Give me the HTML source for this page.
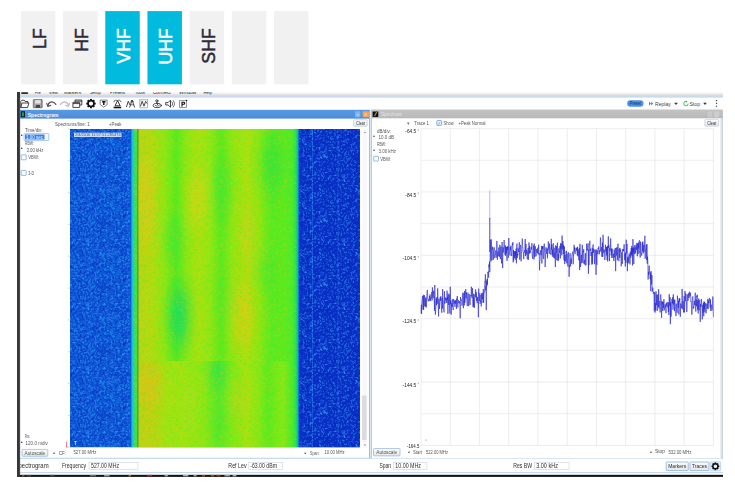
<!DOCTYPE html>
<html lang="en"><head><meta charset="utf-8"><title>Spectrum bands</title>
<style>
html,body{margin:0;padding:0;background:#fff;}
body{width:735px;height:492px;overflow:hidden;font-family:"Liberation Sans","DejaVu Sans",sans-serif;}
svg{display:block;}
text{white-space:pre;}
</style></head><body>
<svg width="735" height="492" viewBox="0 0 735 492" font-family='"Liberation Sans", "DejaVu Sans", sans-serif'>
<defs>
<filter id="bl6" x="-50%" y="-50%" width="200%" height="200%"><feGaussianBlur stdDeviation="6 11"/></filter>
<linearGradient id="ts" x1="0" y1="0" x2="0" y2="1"><stop offset="0" stop-color="#fbfbfb"/><stop offset="1" stop-color="#d9d6d1"/></linearGradient>
<linearGradient id="gtr" x1="0" y1="0" x2="1" y2="0"><stop offset="0" stop-color="#0e58d8"/><stop offset="0.2" stop-color="#20bce0"/><stop offset="0.5" stop-color="#28dc78"/><stop offset="0.85" stop-color="#48e030"/><stop offset="1" stop-color="#58e028"/></linearGradient>
<linearGradient id="tb" x1="0" y1="0" x2="0" y2="1"><stop offset="0" stop-color="#5a9ae0"/><stop offset="1" stop-color="#4a8cd8"/></linearGradient>
<linearGradient id="tg" x1="0" y1="0" x2="0" y2="1"><stop offset="0" stop-color="#c4c4c4"/><stop offset="1" stop-color="#b8b8b8"/></linearGradient>
<linearGradient id="btn" x1="0" y1="0" x2="0" y2="1"><stop offset="0" stop-color="#fbfbfb"/><stop offset="1" stop-color="#e4e6ea"/></linearGradient>
<clipPath id="cy"><rect x="138.3" y="129" width="158.4" height="232"/></clipPath><clipPath id="cy2"><rect x="138.3" y="361" width="158.4" height="86.2"/></clipPath>
<clipPath id="cs"><rect x="20" y="459" width="100" height="14"/></clipPath><clipPath id="cm"><rect x="20" y="92" width="703" height="3.2"/></clipPath>
<pattern id="pb" width="64" height="64" patternUnits="userSpaceOnUse"><g fill="none" stroke-width="1" shape-rendering="crispEdges"><path d="M11 0.5h1M13 3.5h1M17 5.5h3M47 5.5h1M30 6.5h1M32 8.5h1M38 9.5h1M6 10.5h1M21 10.5h1M7 11.5h1M34 11.5h1M60 13.5h1M16 15.5h1M36 15.5h1M58 15.5h1M16 16.5h1M28 16.5h1M28 17.5h1M49 21.5h1M55 22.5h1M61 22.5h1M17 23.5h1M59 23.5h3M34 24.5h1M45 24.5h1M59 24.5h2M15 25.5h2M11 27.5h1M29 33.5h1M28 35.5h1M7 36.5h1M36 38.5h1M33 39.5h1M36 39.5h1M36 40.5h1M19 44.5h1M34 45.5h1M12 48.5h1M18 49.5h1M41 50.5h1M39 52.5h1M39 53.5h1M7 54.5h1M47 54.5h1M51 54.5h1M7 55.5h1M5 57.5h1M4 58.5h1M18 60.5h1M18 61.5h1" stroke="#0620b0" stroke-opacity="0.7"/><path d="M5 0.5h1M5 1.5h2M11 1.5h1M53 1.5h1M23 2.5h1M52 2.5h1M3 3.5h1M14 3.5h1M45 3.5h2M51 3.5h1M60 3.5h1M18 4.5h2M46 4.5h2M16 5.5h1M42 5.5h1M62 5.5h1M12 6.5h1M22 6.5h1M31 6.5h1M35 6.5h1M57 6.5h2M28 7.5h2M33 7.5h1M46 7.5h1M49 7.5h1M52 7.5h1M26 8.5h1M29 8.5h1M33 8.5h1M41 8.5h1M6 9.5h1M13 9.5h1M28 9.5h1M7 10.5h1M30 10.5h1M41 10.5h1M5 11.5h2M16 11.5h1M20 11.5h1M35 11.5h1M38 11.5h1M61 11.5h1M0 12.5h1M11 12.5h1M17 12.5h1M22 12.5h1M34 12.5h1M11 13.5h1M31 13.5h1M1 14.5h1M3 14.5h1M39 14.5h1M3 15.5h2M13 15.5h1M41 15.5h1M44 15.5h2M51 15.5h1M57 15.5h1M59 15.5h1M20 16.5h2M43 16.5h1M45 16.5h2M14 17.5h2M18 17.5h1M34 17.5h1M42 17.5h1M15 18.5h1M25 18.5h1M23 19.5h1M3 20.5h1M19 20.5h1M23 20.5h1M1 21.5h1M3 21.5h1M8 21.5h1M38 21.5h1M49 22.5h1M62 22.5h1M13 23.5h1M35 23.5h1M44 23.5h3M13 24.5h3M33 24.5h1M38 24.5h1M14 25.5h1M51 25.5h1M60 25.5h1M1 26.5h1M9 26.5h1M14 26.5h1M22 26.5h1M44 26.5h1M49 26.5h2M55 26.5h1M59 26.5h1M22 27.5h2M39 27.5h2M50 27.5h1M11 28.5h1M23 28.5h1M32 28.5h2M40 28.5h1M9 29.5h1M17 29.5h1M38 29.5h1M45 29.5h1M52 29.5h1M17 30.5h1M22 30.5h1M34 30.5h2M37 30.5h1M41 30.5h2M44 30.5h1M57 30.5h1M4 31.5h1M9 31.5h1M20 31.5h1M33 31.5h1M36 31.5h3M43 31.5h2M0 32.5h1M5 32.5h1M37 32.5h1M45 32.5h1M6 33.5h1M39 33.5h2M45 33.5h1M57 33.5h1M9 34.5h1M21 34.5h2M28 34.5h1M44 34.5h1M52 34.5h1M27 35.5h1M34 35.5h1M37 35.5h2M52 35.5h1M10 36.5h1M13 36.5h2M17 36.5h1M24 36.5h1M37 36.5h1M39 36.5h2M45 36.5h1M50 36.5h1M53 36.5h1M17 37.5h1M29 37.5h1M10 38.5h1M25 38.5h1M29 38.5h1M59 38.5h1M14 39.5h2M17 39.5h1M34 39.5h1M2 40.5h1M14 40.5h2M33 40.5h1M57 40.5h2M15 41.5h1M36 41.5h1M52 41.5h2M57 41.5h2M61 41.5h1M29 42.5h1M44 42.5h1M13 43.5h1M25 43.5h1M8 44.5h1M13 44.5h1M22 44.5h2M34 44.5h1M9 45.5h2M31 45.5h1M7 46.5h1M12 46.5h1M50 46.5h1M54 46.5h2M7 47.5h1M7 48.5h1M56 48.5h1M60 48.5h1M19 49.5h2M55 49.5h1M4 50.5h1M19 50.5h3M28 50.5h1M36 50.5h1M42 50.5h1M48 50.5h2M4 51.5h1M16 51.5h1M26 51.5h1M28 51.5h1M31 51.5h1M39 51.5h1M58 51.5h1M61 51.5h1M9 52.5h1M14 52.5h1M53 52.5h1M59 52.5h2M63 52.5h1M7 53.5h3M63 53.5h1M0 54.5h1M12 54.5h1M16 54.5h2M35 54.5h1M48 54.5h1M52 54.5h1M54 54.5h1M56 54.5h1M63 54.5h1M2 55.5h1M12 55.5h1M20 55.5h1M24 55.5h1M47 55.5h1M50 55.5h1M52 55.5h1M54 55.5h1M60 55.5h1M7 56.5h1M11 56.5h1M35 56.5h1M53 56.5h1M58 56.5h1M10 57.5h2M17 57.5h1M58 57.5h1M5 58.5h1M8 58.5h1M15 58.5h1M17 58.5h1M25 58.5h1M57 58.5h1M16 59.5h1M57 59.5h1M9 60.5h1M13 60.5h1M22 60.5h1M32 60.5h1M34 60.5h1M42 60.5h1M57 60.5h1M62 60.5h1M10 61.5h1M32 61.5h1M34 61.5h1M57 61.5h1M60 61.5h2M5 62.5h1M22 62.5h1M57 62.5h2M11 63.5h1M17 63.5h1M19 63.5h1M24 63.5h1M55 63.5h1M61 63.5h1" stroke="#0620b0" stroke-opacity="0.46"/><path d="M12 0.5h1M15 0.5h3M20 0.5h1M27 0.5h2M31 0.5h4M36 0.5h1M41 0.5h2M51 0.5h3M60 0.5h1M7 1.5h1M12 1.5h1M28 1.5h2M32 1.5h3M40 1.5h2M46 1.5h1M51 1.5h2M60 1.5h1M0 2.5h1M3 2.5h2M9 2.5h1M12 2.5h1M22 2.5h1M31 2.5h3M41 2.5h2M46 2.5h1M51 2.5h1M57 2.5h1M60 2.5h1M12 3.5h1M15 3.5h1M19 3.5h1M22 3.5h1M32 3.5h1M35 3.5h2M43 3.5h2M52 3.5h1M57 3.5h1M59 3.5h1M63 3.5h1M3 4.5h1M5 4.5h1M13 4.5h1M20 4.5h1M25 4.5h1M32 4.5h1M37 4.5h1M42 4.5h1M45 4.5h1M51 4.5h1M62 4.5h2M1 5.5h1M3 5.5h1M12 5.5h1M20 5.5h1M22 5.5h1M29 5.5h1M34 5.5h2M38 5.5h2M57 5.5h2M63 5.5h1M4 6.5h3M10 6.5h1M16 6.5h2M23 6.5h1M29 6.5h1M32 6.5h1M42 6.5h1M62 6.5h1M5 7.5h1M8 7.5h1M10 7.5h1M12 7.5h1M27 7.5h1M30 7.5h3M34 7.5h1M41 7.5h1M47 7.5h1M50 7.5h1M58 7.5h1M1 8.5h1M4 8.5h1M27 8.5h2M30 8.5h1M37 8.5h3M46 8.5h1M52 8.5h1M56 8.5h1M5 9.5h1M14 9.5h1M26 9.5h2M29 9.5h1M32 9.5h1M37 9.5h1M39 9.5h1M41 9.5h1M45 9.5h1M53 9.5h2M62 9.5h1M2 10.5h1M4 10.5h1M8 10.5h1M19 10.5h2M22 10.5h2M29 10.5h1M31 10.5h1M34 10.5h1M38 10.5h1M42 10.5h1M45 10.5h1M50 10.5h5M58 10.5h3M0 11.5h1M2 11.5h1M8 11.5h1M18 11.5h2M21 11.5h2M30 11.5h2M33 11.5h1M41 11.5h1M51 11.5h3M57 11.5h2M1 12.5h1M8 12.5h2M14 12.5h1M18 12.5h1M20 12.5h1M27 12.5h1M31 12.5h1M35 12.5h1M38 12.5h1M43 12.5h1M55 12.5h3M60 12.5h2M1 13.5h1M14 13.5h2M27 13.5h2M32 13.5h1M39 13.5h1M45 13.5h1M53 13.5h1M57 13.5h1M59 13.5h1M62 13.5h1M0 14.5h1M4 14.5h1M16 14.5h1M23 14.5h1M28 14.5h1M30 14.5h2M36 14.5h1M49 14.5h1M53 14.5h1M58 14.5h2M9 15.5h1M12 15.5h1M17 15.5h1M21 15.5h1M28 15.5h2M37 15.5h1M40 15.5h1M43 15.5h1M46 15.5h1M52 15.5h1M61 15.5h1M4 16.5h2M15 16.5h1M25 16.5h3M29 16.5h1M40 16.5h1M42 16.5h1M44 16.5h1M51 16.5h1M54 16.5h1M58 16.5h1M62 16.5h1M1 17.5h1M16 17.5h1M19 17.5h2M25 17.5h1M29 17.5h1M47 17.5h1M56 17.5h1M58 17.5h6M8 18.5h3M14 18.5h1M16 18.5h1M20 18.5h1M23 18.5h2M26 18.5h1M28 18.5h1M37 18.5h2M44 18.5h2M47 18.5h2M59 18.5h4M4 19.5h1M20 19.5h1M24 19.5h2M30 19.5h1M33 19.5h2M38 19.5h2M54 19.5h2M58 19.5h2M4 20.5h1M7 20.5h1M12 20.5h1M26 20.5h1M30 20.5h1M39 20.5h1M41 20.5h1M49 20.5h1M0 21.5h1M2 21.5h1M10 21.5h3M29 21.5h1M37 21.5h1M40 21.5h2M46 21.5h1M48 21.5h1M55 21.5h1M2 22.5h2M6 22.5h2M15 22.5h2M22 22.5h1M27 22.5h2M40 22.5h1M51 22.5h2M54 22.5h1M7 23.5h1M18 23.5h1M24 23.5h1M27 23.5h1M34 23.5h1M49 23.5h1M56 23.5h1M7 24.5h3M12 24.5h1M16 24.5h1M18 24.5h1M27 24.5h1M30 24.5h1M35 24.5h1M39 24.5h1M41 24.5h2M48 24.5h1M51 24.5h1M54 24.5h1M56 24.5h1M58 24.5h1M61 24.5h1M8 25.5h3M13 25.5h1M17 25.5h1M20 25.5h4M27 25.5h1M29 25.5h1M34 25.5h2M38 25.5h2M42 25.5h2M45 25.5h1M48 25.5h1M50 25.5h1M52 25.5h1M56 25.5h1M59 25.5h1M7 26.5h2M16 26.5h2M20 26.5h2M27 26.5h1M30 26.5h1M32 26.5h1M34 26.5h1M36 26.5h1M38 26.5h2M41 26.5h1M51 26.5h1M56 26.5h1M8 27.5h1M10 27.5h1M17 27.5h1M27 27.5h1M31 27.5h1M36 27.5h1M38 27.5h1M41 27.5h2M49 27.5h1M55 27.5h1M59 27.5h1M8 28.5h1M10 28.5h1M17 28.5h1M22 28.5h1M28 28.5h1M34 28.5h1M38 28.5h1M41 28.5h1M45 28.5h1M57 28.5h1M60 28.5h2M8 29.5h1M10 29.5h1M14 29.5h1M16 29.5h1M18 29.5h3M27 29.5h2M32 29.5h4M40 29.5h2M46 29.5h1M48 29.5h1M51 29.5h1M53 29.5h1M56 29.5h3M8 30.5h2M14 30.5h1M16 30.5h1M18 30.5h1M21 30.5h1M25 30.5h1M38 30.5h3M43 30.5h1M45 30.5h1M47 30.5h2M51 30.5h2M56 30.5h1M0 31.5h4M5 31.5h1M13 31.5h1M18 31.5h2M25 31.5h1M34 31.5h2M40 31.5h3M45 31.5h1M52 31.5h1M56 31.5h1M60 31.5h1M4 32.5h1M6 32.5h1M12 32.5h1M17 32.5h2M30 32.5h1M32 32.5h1M35 32.5h2M38 32.5h1M40 32.5h2M44 32.5h1M46 32.5h1M53 32.5h1M56 32.5h1M59 32.5h1M61 32.5h1M9 33.5h2M13 33.5h1M16 33.5h1M28 33.5h1M32 33.5h1M38 33.5h1M44 33.5h1M46 33.5h1M56 33.5h1M5 34.5h1M14 34.5h2M19 34.5h2M23 34.5h1M27 34.5h1M29 34.5h1M33 34.5h1M37 34.5h3M43 34.5h1M47 34.5h3M55 34.5h3M4 35.5h2M14 35.5h1M16 35.5h2M23 35.5h2M32 35.5h2M39 35.5h1M46 35.5h1M49 35.5h1M53 35.5h1M60 35.5h3M3 36.5h2M8 36.5h1M18 36.5h1M21 36.5h1M26 36.5h1M34 36.5h1M36 36.5h1M38 36.5h1M52 36.5h1M55 36.5h1M58 36.5h1M3 37.5h1M5 37.5h4M10 37.5h1M13 37.5h2M16 37.5h1M21 37.5h2M25 37.5h1M36 37.5h1M52 37.5h1M56 37.5h1M59 37.5h1M0 38.5h2M4 38.5h2M13 38.5h1M17 38.5h1M20 38.5h1M24 38.5h1M28 38.5h1M30 38.5h2M33 38.5h2M46 38.5h2M49 38.5h2M52 38.5h1M60 38.5h3M6 39.5h3M11 39.5h1M18 39.5h1M20 39.5h1M22 39.5h1M24 39.5h2M38 39.5h1M49 39.5h1M57 39.5h1M60 39.5h2M20 40.5h1M22 40.5h2M25 40.5h1M37 40.5h3M41 40.5h1M45 40.5h1M51 40.5h2M56 40.5h1M6 41.5h1M11 41.5h2M14 41.5h1M22 41.5h1M43 41.5h3M50 41.5h2M56 41.5h1M59 41.5h1M62 41.5h2M5 42.5h3M11 42.5h3M15 42.5h1M22 42.5h1M25 42.5h2M37 42.5h1M39 42.5h1M43 42.5h1M45 42.5h1M52 42.5h2M57 42.5h1M60 42.5h1M1 43.5h6M12 43.5h1M15 43.5h1M19 43.5h1M22 43.5h3M28 43.5h2M36 43.5h3M40 43.5h1M43 43.5h1M51 43.5h1M53 43.5h3M57 43.5h1M61 43.5h2M9 44.5h1M12 44.5h1M16 44.5h3M20 44.5h1M27 44.5h2M35 44.5h1M39 44.5h1M44 44.5h1M54 44.5h2M57 44.5h1M62 44.5h1M7 45.5h2M13 45.5h3M19 45.5h1M22 45.5h2M32 45.5h1M35 45.5h1M38 45.5h4M54 45.5h4M0 46.5h1M5 46.5h2M13 46.5h2M31 46.5h1M34 46.5h1M36 46.5h1M38 46.5h1M51 46.5h1M63 46.5h1M6 47.5h1M12 47.5h1M26 47.5h1M29 47.5h1M43 47.5h3M5 48.5h1M8 48.5h1M13 48.5h1M17 48.5h1M20 48.5h1M25 48.5h2M28 48.5h1M30 48.5h1M45 48.5h3M54 48.5h2M57 48.5h1M5 49.5h2M11 49.5h2M17 49.5h1M29 49.5h1M33 49.5h1M38 49.5h1M42 49.5h1M48 49.5h2M53 49.5h2M56 49.5h1M2 50.5h1M5 50.5h1M11 50.5h1M15 50.5h2M31 50.5h2M37 50.5h3M46 50.5h1M50 50.5h1M52 50.5h2M61 50.5h1M0 51.5h1M5 51.5h1M9 51.5h1M15 51.5h1M17 51.5h1M25 51.5h1M27 51.5h1M32 51.5h1M35 51.5h3M40 51.5h1M47 51.5h3M56 51.5h2M59 51.5h2M0 52.5h1M4 52.5h1M7 52.5h2M15 52.5h2M26 52.5h1M30 52.5h2M36 52.5h3M40 52.5h1M43 52.5h1M51 52.5h2M54 52.5h1M58 52.5h1M61 52.5h1M0 53.5h3M4 53.5h3M10 53.5h1M13 53.5h1M22 53.5h1M30 53.5h1M32 53.5h1M35 53.5h2M40 53.5h1M45 53.5h1M48 53.5h1M51 53.5h1M53 53.5h2M62 53.5h1M1 54.5h3M5 54.5h2M9 54.5h2M20 54.5h4M25 54.5h1M28 54.5h1M30 54.5h2M36 54.5h5M45 54.5h2M50 54.5h1M55 54.5h1M62 54.5h1M1 55.5h1M3 55.5h1M6 55.5h1M11 55.5h1M14 55.5h4M25 55.5h1M28 55.5h2M35 55.5h1M37 55.5h1M41 55.5h1M44 55.5h1M51 55.5h1M53 55.5h1M57 55.5h1M61 55.5h3M5 56.5h2M10 56.5h1M14 56.5h1M29 56.5h1M36 56.5h2M41 56.5h1M46 56.5h2M54 56.5h1M59 56.5h1M3 57.5h2M9 57.5h1M27 57.5h1M41 57.5h2M57 57.5h1M59 57.5h3M7 58.5h1M9 58.5h1M16 58.5h1M26 58.5h1M39 58.5h1M41 58.5h1M51 58.5h2M55 58.5h2M58 58.5h2M61 58.5h1M3 59.5h2M6 59.5h1M9 59.5h1M13 59.5h1M15 59.5h1M17 59.5h2M23 59.5h1M27 59.5h1M30 59.5h2M38 59.5h3M59 59.5h1M1 60.5h2M6 60.5h1M12 60.5h1M15 60.5h1M21 60.5h1M27 60.5h1M31 60.5h1M38 60.5h1M43 60.5h1M46 60.5h2M56 60.5h1M61 60.5h1M7 61.5h1M22 61.5h2M25 61.5h1M31 61.5h1M33 61.5h1M41 61.5h1M54 61.5h1M58 61.5h1M4 62.5h1M10 62.5h1M16 62.5h1M18 62.5h2M27 62.5h3M46 62.5h1M52 62.5h1M61 62.5h2M5 63.5h1M16 63.5h1M20 63.5h1M28 63.5h1M32 63.5h2M41 63.5h2M47 63.5h1M50 63.5h2M56 63.5h3M62 63.5h1" stroke="#0620b0" stroke-opacity="0.24"/><path d="M4 0.5h1M6 0.5h1M9 0.5h2M14 0.5h1M21 0.5h3M39 0.5h1M46 0.5h1M48 0.5h1M56 0.5h4M61 0.5h2M0 1.5h1M2 1.5h1M9 1.5h1M13 1.5h3M19 1.5h1M24 1.5h1M26 1.5h1M37 1.5h3M47 1.5h2M54 1.5h2M61 1.5h1M63 1.5h1M1 2.5h1M6 2.5h1M10 2.5h1M14 2.5h2M20 2.5h2M24 2.5h1M26 2.5h1M38 2.5h2M43 2.5h1M48 2.5h1M54 2.5h1M58 2.5h2M61 2.5h1M5 3.5h3M9 3.5h1M20 3.5h1M23 3.5h2M26 3.5h2M29 3.5h1M53 3.5h3M62 3.5h1M1 4.5h1M6 4.5h1M10 4.5h2M14 4.5h4M21 4.5h1M23 4.5h1M27 4.5h2M30 4.5h1M40 4.5h2M54 4.5h2M7 5.5h1M9 5.5h3M21 5.5h1M27 5.5h2M31 5.5h1M33 5.5h1M41 5.5h1M45 5.5h1M49 5.5h1M52 5.5h1M59 5.5h2M0 6.5h1M7 6.5h1M14 6.5h1M19 6.5h1M24 6.5h2M33 6.5h1M46 6.5h3M50 6.5h1M53 6.5h1M56 6.5h1M59 6.5h1M63 6.5h1M1 7.5h1M3 7.5h1M6 7.5h1M14 7.5h2M18 7.5h1M20 7.5h1M35 7.5h1M37 7.5h2M43 7.5h1M53 7.5h1M61 7.5h1M63 7.5h1M7 8.5h1M12 8.5h1M14 8.5h1M16 8.5h1M21 8.5h1M40 8.5h1M43 8.5h1M45 8.5h1M48 8.5h1M50 8.5h1M54 8.5h1M59 8.5h2M62 8.5h1M0 9.5h1M3 9.5h2M8 9.5h1M16 9.5h1M18 9.5h3M23 9.5h1M33 9.5h2M36 9.5h1M40 9.5h1M46 9.5h5M61 9.5h1M1 10.5h1M3 10.5h1M13 10.5h1M16 10.5h2M27 10.5h1M32 10.5h2M36 10.5h1M46 10.5h3M57 10.5h1M61 10.5h1M63 10.5h1M3 11.5h1M10 11.5h1M12 11.5h2M25 11.5h2M37 11.5h1M43 11.5h2M47 11.5h1M56 11.5h1M60 11.5h1M63 11.5h1M3 12.5h2M6 12.5h1M21 12.5h1M23 12.5h4M28 12.5h1M32 12.5h1M39 12.5h2M47 12.5h2M53 12.5h1M59 12.5h1M3 13.5h1M6 13.5h2M9 13.5h2M12 13.5h1M17 13.5h2M21 13.5h2M25 13.5h2M38 13.5h1M43 13.5h2M46 13.5h1M48 13.5h2M6 14.5h2M12 14.5h1M14 14.5h2M18 14.5h2M24 14.5h1M27 14.5h1M35 14.5h1M40 14.5h3M44 14.5h1M46 14.5h1M51 14.5h2M55 14.5h2M63 14.5h1M1 15.5h1M14 15.5h1M18 15.5h1M27 15.5h1M32 15.5h2M47 15.5h2M50 15.5h1M53 15.5h2M56 15.5h1M0 16.5h3M8 16.5h1M10 16.5h2M22 16.5h1M30 16.5h1M32 16.5h1M34 16.5h1M52 16.5h2M55 16.5h2M60 16.5h1M2 17.5h2M10 17.5h4M21 17.5h1M23 17.5h2M33 17.5h1M36 17.5h1M49 17.5h1M51 17.5h1M54 17.5h1M57 17.5h1M0 18.5h2M3 18.5h1M6 18.5h1M12 18.5h1M17 18.5h3M21 18.5h1M31 18.5h1M36 18.5h1M40 18.5h1M42 18.5h1M46 18.5h1M49 18.5h1M58 18.5h1M0 19.5h1M2 19.5h1M5 19.5h2M8 19.5h2M11 19.5h2M15 19.5h3M28 19.5h2M35 19.5h1M42 19.5h2M46 19.5h2M50 19.5h1M61 19.5h2M0 20.5h1M5 20.5h2M9 20.5h2M13 20.5h2M16 20.5h2M20 20.5h1M27 20.5h1M31 20.5h2M35 20.5h3M42 20.5h1M44 20.5h1M47 20.5h1M50 20.5h1M52 20.5h1M56 20.5h1M60 20.5h1M62 20.5h1M16 21.5h1M18 21.5h2M21 21.5h1M24 21.5h2M30 21.5h1M32 21.5h1M34 21.5h1M52 21.5h2M56 21.5h1M60 21.5h1M4 22.5h2M8 22.5h1M11 22.5h2M33 22.5h2M38 22.5h1M42 22.5h2M48 22.5h1M63 22.5h1M0 23.5h1M2 23.5h2M5 23.5h2M10 23.5h1M15 23.5h1M22 23.5h2M28 23.5h1M47 23.5h2M50 23.5h1M58 23.5h1M0 24.5h2M4 24.5h1M6 24.5h1M11 24.5h1M21 24.5h1M26 24.5h1M28 24.5h1M31 24.5h1M36 24.5h2M50 24.5h1M52 24.5h1M62 24.5h2M0 25.5h2M5 25.5h1M11 25.5h1M24 25.5h1M28 25.5h1M40 25.5h2M44 25.5h1M46 25.5h2M57 25.5h2M62 25.5h2M2 26.5h1M5 26.5h1M10 26.5h1M15 26.5h1M25 26.5h2M42 26.5h1M45 26.5h2M58 26.5h1M61 26.5h1M63 26.5h1M0 27.5h1M2 27.5h1M5 27.5h1M7 27.5h1M12 27.5h1M15 27.5h1M18 27.5h1M21 27.5h1M24 27.5h2M29 27.5h1M45 27.5h3M51 27.5h1M53 27.5h2M57 27.5h1M60 27.5h4M9 28.5h1M13 28.5h1M16 28.5h1M18 28.5h1M25 28.5h1M27 28.5h1M42 28.5h3M46 28.5h1M51 28.5h2M54 28.5h2M3 29.5h1M5 29.5h1M15 29.5h1M21 29.5h1M24 29.5h1M26 29.5h1M29 29.5h1M42 29.5h3M49 29.5h2M54 29.5h1M60 29.5h2M2 30.5h1M10 30.5h3M15 30.5h1M19 30.5h2M23 30.5h2M26 30.5h2M29 30.5h1M53 30.5h1M59 30.5h1M7 31.5h1M11 31.5h1M14 31.5h1M16 31.5h1M23 31.5h1M26 31.5h2M29 31.5h1M32 31.5h1M50 31.5h1M53 31.5h1M55 31.5h1M62 31.5h2M8 32.5h1M14 32.5h2M20 32.5h1M23 32.5h2M27 32.5h2M31 32.5h1M33 32.5h2M50 32.5h1M54 32.5h2M60 32.5h1M1 33.5h1M3 33.5h3M17 33.5h1M20 33.5h1M26 33.5h2M31 33.5h1M34 33.5h3M43 33.5h1M49 33.5h1M51 33.5h1M54 33.5h1M58 33.5h1M61 33.5h3M0 34.5h1M3 34.5h2M7 34.5h1M11 34.5h1M17 34.5h1M25 34.5h2M34 34.5h1M40 34.5h3M51 34.5h1M60 34.5h1M2 35.5h1M10 35.5h4M18 35.5h1M22 35.5h1M25 35.5h2M30 35.5h1M36 35.5h1M42 35.5h1M47 35.5h1M54 35.5h1M56 35.5h2M2 36.5h1M12 36.5h1M15 36.5h2M19 36.5h1M27 36.5h2M30 36.5h1M32 36.5h1M57 36.5h1M63 36.5h1M0 37.5h2M9 37.5h1M12 37.5h1M15 37.5h1M19 37.5h1M31 37.5h1M33 37.5h1M38 37.5h1M40 37.5h1M42 37.5h1M44 37.5h1M46 37.5h1M57 37.5h1M7 38.5h2M12 38.5h1M23 38.5h1M26 38.5h1M39 38.5h1M41 38.5h1M43 38.5h1M51 38.5h1M56 38.5h2M4 39.5h1M12 39.5h1M21 39.5h1M26 39.5h1M47 39.5h2M50 39.5h2M53 39.5h1M56 39.5h1M59 39.5h1M0 40.5h2M7 40.5h2M10 40.5h1M13 40.5h1M17 40.5h3M21 40.5h1M24 40.5h1M26 40.5h2M30 40.5h2M34 40.5h2M42 40.5h2M47 40.5h2M53 40.5h1M60 40.5h1M4 41.5h1M8 41.5h1M10 41.5h1M13 41.5h1M16 41.5h2M19 41.5h1M23 41.5h1M25 41.5h1M31 41.5h1M33 41.5h1M35 41.5h1M38 41.5h1M46 41.5h1M54 41.5h1M60 41.5h1M0 42.5h1M9 42.5h2M16 42.5h3M20 42.5h1M32 42.5h2M40 42.5h1M42 42.5h1M51 42.5h1M54 42.5h1M63 42.5h1M0 43.5h1M8 43.5h4M18 43.5h1M20 43.5h1M39 43.5h1M42 43.5h1M45 43.5h3M50 43.5h1M58 43.5h2M63 43.5h1M2 44.5h2M7 44.5h1M15 44.5h1M31 44.5h2M37 44.5h1M41 44.5h2M46 44.5h1M50 44.5h1M60 44.5h2M63 44.5h1M27 45.5h1M36 45.5h1M43 45.5h1M48 45.5h2M3 46.5h1M15 46.5h2M22 46.5h3M26 46.5h1M28 46.5h2M32 46.5h1M42 46.5h1M46 46.5h1M48 46.5h1M60 46.5h1M62 46.5h1M4 47.5h1M9 47.5h3M13 47.5h1M16 47.5h1M18 47.5h1M21 47.5h3M25 47.5h1M27 47.5h1M39 47.5h1M47 47.5h1M49 47.5h1M56 47.5h4M61 47.5h1M63 47.5h1M1 48.5h1M3 48.5h2M10 48.5h2M18 48.5h1M21 48.5h2M27 48.5h1M31 48.5h2M36 48.5h1M38 48.5h1M50 48.5h1M10 49.5h1M16 49.5h1M25 49.5h3M32 49.5h1M34 49.5h2M39 49.5h2M57 49.5h2M62 49.5h2M3 50.5h1M7 50.5h1M12 50.5h1M14 50.5h1M17 50.5h1M23 50.5h4M33 50.5h1M43 50.5h1M51 50.5h1M54 50.5h1M58 50.5h1M1 51.5h2M10 51.5h1M12 51.5h1M23 51.5h1M38 51.5h1M43 51.5h1M52 51.5h2M63 51.5h1M1 52.5h2M11 52.5h2M20 52.5h3M27 52.5h3M34 52.5h1M41 52.5h1M46 52.5h1M49 52.5h2M55 52.5h1M11 53.5h1M16 53.5h2M19 53.5h1M27 53.5h3M41 53.5h3M56 53.5h1M32 54.5h2M42 54.5h2M58 54.5h2M4 55.5h2M9 55.5h2M22 55.5h1M27 55.5h1M32 55.5h2M42 55.5h1M59 55.5h1M0 56.5h1M2 56.5h1M4 56.5h1M15 56.5h1M24 56.5h1M32 56.5h1M39 56.5h1M42 56.5h1M48 56.5h1M52 56.5h1M55 56.5h1M57 56.5h1M63 56.5h1M0 57.5h2M13 57.5h1M18 57.5h3M23 57.5h1M28 57.5h2M32 57.5h2M35 57.5h1M37 57.5h1M40 57.5h1M44 57.5h2M49 57.5h2M55 57.5h1M0 58.5h2M11 58.5h1M19 58.5h2M23 58.5h1M29 58.5h1M32 58.5h1M38 58.5h1M44 58.5h5M54 58.5h1M60 58.5h1M63 58.5h1M10 59.5h1M19 59.5h1M24 59.5h1M26 59.5h1M28 59.5h1M33 59.5h1M41 59.5h1M45 59.5h1M48 59.5h1M50 59.5h4M55 59.5h1M0 60.5h1M8 60.5h1M20 60.5h1M28 60.5h1M30 60.5h1M40 60.5h1M44 60.5h2M50 60.5h1M52 60.5h4M2 61.5h1M6 61.5h1M8 61.5h1M11 61.5h2M20 61.5h2M29 61.5h2M39 61.5h1M44 61.5h1M46 61.5h1M48 61.5h2M51 61.5h2M55 61.5h2M0 62.5h1M3 62.5h1M6 62.5h1M12 62.5h1M20 62.5h1M25 62.5h1M30 62.5h2M35 62.5h1M38 62.5h1M40 62.5h1M42 62.5h3M47 62.5h3M51 62.5h1M53 62.5h1M3 63.5h2M21 63.5h1M26 63.5h1M30 63.5h2M36 63.5h1M43 63.5h2M52 63.5h1M63 63.5h1" stroke="#30a4f0" stroke-opacity="0.24"/><path d="M0 0.5h1M38 0.5h1M43 0.5h1M47 0.5h1M3 1.5h2M25 1.5h1M58 1.5h2M62 1.5h1M40 2.5h1M44 2.5h1M55 2.5h1M62 2.5h1M0 3.5h2M11 3.5h1M17 3.5h1M28 3.5h1M30 3.5h1M33 3.5h1M40 3.5h2M56 3.5h1M61 3.5h1M0 4.5h1M9 4.5h1M44 4.5h1M49 4.5h1M56 4.5h1M59 4.5h1M14 5.5h1M54 5.5h3M15 6.5h1M27 6.5h2M37 6.5h1M40 6.5h1M54 6.5h2M19 7.5h1M25 7.5h1M36 7.5h1M39 7.5h2M62 7.5h1M8 8.5h1M11 8.5h1M17 8.5h2M35 8.5h2M61 8.5h1M10 9.5h1M17 9.5h1M35 9.5h1M0 10.5h1M10 10.5h3M44 10.5h1M56 10.5h1M11 11.5h1M27 11.5h1M46 11.5h1M48 11.5h1M59 11.5h1M41 12.5h1M8 13.5h1M13 13.5h1M24 13.5h1M40 13.5h1M47 13.5h1M55 13.5h1M10 14.5h1M26 14.5h1M34 14.5h1M47 14.5h1M34 15.5h1M49 15.5h1M3 16.5h1M12 16.5h1M23 16.5h2M31 16.5h1M33 16.5h1M48 16.5h1M50 16.5h1M31 17.5h1M44 17.5h1M39 18.5h1M53 18.5h2M57 18.5h1M14 19.5h1M18 19.5h1M31 19.5h1M36 19.5h1M40 19.5h2M60 19.5h1M21 20.5h1M43 20.5h1M5 21.5h2M43 21.5h1M47 21.5h1M50 21.5h1M57 21.5h1M63 21.5h1M18 22.5h2M30 22.5h3M37 22.5h1M47 22.5h1M57 22.5h2M1 23.5h1M4 23.5h1M19 23.5h1M26 23.5h1M31 23.5h1M37 23.5h1M2 24.5h2M22 24.5h1M25 24.5h1M47 24.5h1M6 25.5h1M25 25.5h1M3 26.5h2M12 26.5h1M18 26.5h2M24 26.5h1M28 26.5h1M33 26.5h1M47 26.5h1M3 27.5h1M13 27.5h1M19 27.5h2M48 27.5h1M52 27.5h1M0 28.5h2M3 28.5h1M6 28.5h2M15 28.5h1M26 28.5h1M47 28.5h1M53 28.5h1M4 29.5h1M7 29.5h1M30 29.5h1M1 30.5h1M6 30.5h1M28 30.5h1M30 30.5h1M55 30.5h1M62 30.5h2M15 31.5h1M28 31.5h1M54 31.5h1M21 32.5h2M49 32.5h1M18 33.5h1M24 33.5h1M42 33.5h1M59 33.5h2M35 34.5h1M63 34.5h1M19 35.5h1M44 35.5h1M58 35.5h1M22 36.5h1M31 36.5h1M51 36.5h1M23 37.5h1M28 37.5h1M34 37.5h1M39 37.5h1M51 37.5h1M63 37.5h1M27 38.5h1M38 38.5h1M55 38.5h1M42 39.5h1M55 39.5h1M16 40.5h1M54 40.5h1M1 41.5h1M3 41.5h1M9 41.5h1M21 41.5h1M24 41.5h1M28 41.5h1M32 41.5h1M48 41.5h1M21 42.5h1M34 42.5h1M47 42.5h1M62 42.5h1M21 43.5h1M33 43.5h1M59 44.5h1M1 45.5h1M3 45.5h1M58 45.5h2M1 46.5h1M27 46.5h1M33 46.5h1M47 46.5h1M58 46.5h2M1 47.5h2M14 47.5h1M24 47.5h1M33 47.5h1M48 47.5h1M51 47.5h1M53 47.5h1M62 47.5h1M2 48.5h1M9 48.5h1M23 48.5h2M39 48.5h1M41 48.5h1M51 48.5h2M8 49.5h2M22 49.5h3M31 49.5h1M51 49.5h1M13 50.5h1M34 50.5h1M55 50.5h1M59 50.5h1M62 50.5h2M8 51.5h1M13 51.5h1M18 51.5h2M51 51.5h1M54 51.5h2M62 51.5h1M5 52.5h2M19 52.5h1M23 52.5h1M33 52.5h1M56 52.5h1M25 53.5h1M33 53.5h2M47 53.5h1M60 53.5h2M41 54.5h1M26 55.5h1M39 55.5h1M18 56.5h1M22 56.5h1M49 56.5h1M31 57.5h1M36 57.5h1M48 57.5h1M63 57.5h1M37 58.5h1M43 58.5h1M11 59.5h1M20 59.5h1M4 60.5h1M24 60.5h3M35 60.5h1M51 60.5h1M37 61.5h1M40 61.5h1M43 61.5h1M47 61.5h1M63 61.5h1M2 62.5h1M36 62.5h2M39 62.5h1M45 62.5h1M50 62.5h1M2 63.5h1M6 63.5h1M13 63.5h2M35 63.5h1M38 63.5h2M45 63.5h2" stroke="#30a4f0" stroke-opacity="0.46"/><path d="M25 2.5h1M58 4.5h1M53 8.5h1M43 10.5h1M28 11.5h1M46 12.5h1M23 13.5h1M41 13.5h1M49 16.5h1M13 19.5h1M63 19.5h1M63 20.5h1M9 22.5h2M33 25.5h1M4 27.5h1M4 28.5h2M0 29.5h2M6 29.5h1M54 30.5h1M61 30.5h1M58 34.5h2M27 37.5h1M42 38.5h1M54 38.5h1M54 39.5h1M48 42.5h1M5 44.5h2M15 47.5h1M40 47.5h1M52 47.5h1M40 48.5h1M3 49.5h1M8 50.5h1M24 51.5h1M24 52.5h1M24 53.5h1M23 56.5h1M54 59.5h1M36 60.5h1M63 60.5h1M0 61.5h1M36 61.5h1M13 62.5h1" stroke="#30a4f0" stroke-opacity="0.7"/></g></pattern><pattern id="py" width="64" height="64" patternUnits="userSpaceOnUse"><g fill="none" stroke-width="1" shape-rendering="crispEdges"><path d="M4 1.5h1M60 1.5h1M4 5.5h1M16 9.5h1M54 10.5h1M62 10.5h1M47 11.5h1M31 12.5h1M53 12.5h1M52 15.5h1M25 16.5h2M26 22.5h1M45 23.5h1M54 23.5h1M61 23.5h1M19 24.5h1M49 30.5h1M15 31.5h1M41 31.5h1M9 35.5h1M48 36.5h1M18 37.5h1M41 37.5h1M57 37.5h1M27 40.5h1M49 40.5h1M63 43.5h1M41 44.5h2M52 44.5h1M5 46.5h1M58 46.5h1M38 51.5h1M38 52.5h1M41 52.5h1M28 55.5h1M34 55.5h1M3 57.5h1M3 58.5h1M37 58.5h1M6 60.5h1M29 61.5h1M45 61.5h1M48 62.5h1" stroke="#40ee28" stroke-opacity="0.36"/><path d="M10 0.5h1M14 0.5h1M52 0.5h1M6 1.5h1M10 1.5h1M38 1.5h1M50 1.5h2M59 1.5h1M63 1.5h1M30 2.5h1M49 2.5h1M60 2.5h1M19 3.5h1M47 3.5h1M54 3.5h1M25 4.5h1M32 4.5h1M51 4.5h1M23 5.5h1M26 5.5h1M4 6.5h1M23 6.5h1M28 6.5h1M57 6.5h1M7 7.5h1M10 7.5h1M19 7.5h1M43 7.5h1M45 7.5h1M47 7.5h1M57 7.5h1M5 8.5h1M31 8.5h1M38 8.5h2M63 8.5h1M12 9.5h1M14 9.5h1M17 9.5h1M28 9.5h1M31 9.5h1M45 9.5h1M13 10.5h1M18 10.5h1M25 10.5h1M39 10.5h1M47 10.5h1M60 10.5h1M53 11.5h1M60 11.5h1M7 12.5h1M48 12.5h2M6 13.5h2M16 13.5h1M46 13.5h1M4 14.5h4M53 14.5h1M6 15.5h1M26 15.5h1M32 15.5h1M47 15.5h1M51 15.5h1M62 15.5h1M32 16.5h1M52 16.5h1M26 17.5h1M32 17.5h2M35 17.5h1M52 17.5h1M55 17.5h1M9 18.5h1M16 18.5h1M21 18.5h1M15 19.5h2M18 19.5h1M23 19.5h1M16 20.5h1M60 20.5h1M62 20.5h1M10 21.5h2M23 21.5h1M26 21.5h1M33 21.5h2M39 21.5h2M52 21.5h1M4 22.5h1M28 22.5h1M4 23.5h1M8 23.5h2M15 23.5h1M28 23.5h3M44 23.5h1M46 23.5h1M62 23.5h2M14 24.5h3M20 24.5h1M28 24.5h1M0 25.5h1M17 25.5h1M20 25.5h1M43 25.5h1M50 25.5h1M1 26.5h1M12 26.5h2M31 26.5h1M50 26.5h1M55 26.5h2M1 27.5h1M7 27.5h1M10 27.5h1M12 27.5h1M16 27.5h1M23 27.5h1M26 27.5h1M44 27.5h3M58 27.5h2M6 28.5h3M10 28.5h1M47 28.5h1M58 28.5h1M6 29.5h1M11 29.5h1M49 29.5h1M6 30.5h1M14 30.5h1M33 30.5h1M14 31.5h1M18 31.5h1M21 31.5h1M42 31.5h1M49 31.5h1M56 31.5h1M59 31.5h1M3 32.5h1M14 32.5h2M29 32.5h1M58 32.5h2M5 33.5h2M12 33.5h1M35 33.5h1M42 33.5h2M46 33.5h1M50 33.5h1M53 33.5h1M26 34.5h1M44 34.5h1M8 35.5h1M10 35.5h1M28 35.5h1M48 35.5h1M2 36.5h1M10 36.5h2M18 36.5h1M23 36.5h2M32 36.5h1M42 36.5h1M49 36.5h2M56 36.5h1M58 36.5h1M5 37.5h1M9 37.5h1M24 37.5h1M42 37.5h1M56 37.5h1M58 37.5h1M6 38.5h1M8 38.5h1M10 38.5h1M46 38.5h1M57 38.5h1M12 39.5h1M26 39.5h1M0 40.5h1M23 40.5h1M48 40.5h1M54 40.5h1M0 41.5h1M11 41.5h1M23 41.5h1M38 41.5h1M48 41.5h1M53 41.5h1M14 42.5h1M26 42.5h1M29 42.5h1M32 42.5h2M35 42.5h1M38 42.5h1M52 42.5h1M63 42.5h1M25 43.5h1M52 43.5h1M59 43.5h1M2 44.5h1M15 44.5h1M21 44.5h1M25 44.5h1M28 44.5h1M34 44.5h1M53 44.5h1M59 44.5h1M14 45.5h1M43 45.5h1M58 45.5h1M4 46.5h1M7 46.5h1M43 46.5h1M56 46.5h1M59 46.5h1M2 47.5h2M15 47.5h1M20 47.5h2M35 47.5h1M61 47.5h2M2 48.5h1M9 48.5h1M12 48.5h2M44 48.5h2M62 48.5h1M2 49.5h1M7 49.5h1M9 49.5h2M27 49.5h1M36 49.5h1M45 49.5h1M60 49.5h1M0 50.5h1M5 50.5h1M21 50.5h1M28 50.5h1M38 50.5h1M63 50.5h1M23 51.5h2M26 51.5h1M50 51.5h1M7 52.5h1M24 52.5h2M45 52.5h1M22 53.5h1M45 53.5h2M49 53.5h1M55 53.5h1M60 53.5h2M42 54.5h2M46 54.5h1M55 54.5h1M58 54.5h2M2 55.5h1M15 55.5h1M27 55.5h1M33 55.5h1M50 55.5h2M55 55.5h1M10 56.5h1M29 56.5h1M41 56.5h1M44 56.5h2M60 56.5h1M2 57.5h1M4 58.5h1M43 58.5h1M56 58.5h1M12 59.5h1M48 59.5h1M49 60.5h1M62 60.5h1M30 61.5h1M37 61.5h2M49 62.5h1M63 62.5h1M21 63.5h1M27 63.5h1" stroke="#40ee28" stroke-opacity="0.24"/><path d="M6 0.5h1M9 0.5h1M11 0.5h1M15 0.5h1M18 0.5h1M20 0.5h3M27 0.5h1M53 0.5h2M63 0.5h1M3 1.5h1M11 1.5h1M14 1.5h1M22 1.5h3M29 1.5h2M32 1.5h1M49 1.5h1M54 1.5h1M61 1.5h2M0 2.5h1M3 2.5h3M15 2.5h2M20 2.5h2M24 2.5h1M32 2.5h1M38 2.5h1M41 2.5h1M48 2.5h1M51 2.5h1M54 2.5h3M59 2.5h1M61 2.5h1M2 3.5h1M9 3.5h3M16 3.5h1M18 3.5h1M20 3.5h1M23 3.5h2M26 3.5h2M29 3.5h1M32 3.5h1M39 3.5h1M43 3.5h2M46 3.5h1M48 3.5h1M51 3.5h3M55 3.5h2M2 4.5h1M7 4.5h2M16 4.5h1M19 4.5h1M23 4.5h2M26 4.5h1M28 4.5h1M30 4.5h1M34 4.5h4M52 4.5h1M62 4.5h1M5 5.5h1M8 5.5h1M18 5.5h2M21 5.5h1M24 5.5h2M30 5.5h1M34 5.5h1M37 5.5h1M41 5.5h2M47 5.5h2M50 5.5h2M56 5.5h1M59 5.5h1M3 6.5h1M7 6.5h1M10 6.5h1M19 6.5h1M22 6.5h1M25 6.5h3M35 6.5h1M37 6.5h1M41 6.5h1M46 6.5h2M49 6.5h1M55 6.5h2M62 6.5h1M3 7.5h1M23 7.5h1M25 7.5h1M28 7.5h1M30 7.5h2M38 7.5h1M41 7.5h1M44 7.5h1M48 7.5h1M61 7.5h1M1 8.5h1M9 8.5h2M12 8.5h2M15 8.5h2M18 8.5h1M25 8.5h1M28 8.5h1M30 8.5h1M37 8.5h1M41 8.5h1M43 8.5h4M50 8.5h1M9 9.5h1M11 9.5h1M13 9.5h1M15 9.5h1M18 9.5h1M21 9.5h1M27 9.5h1M29 9.5h2M34 9.5h1M36 9.5h1M44 9.5h1M48 9.5h2M53 9.5h2M60 9.5h1M63 9.5h1M6 10.5h1M10 10.5h3M14 10.5h4M30 10.5h2M35 10.5h2M38 10.5h1M45 10.5h1M48 10.5h2M55 10.5h1M61 10.5h1M63 10.5h1M2 11.5h1M6 11.5h1M12 11.5h2M17 11.5h1M28 11.5h1M31 11.5h1M34 11.5h2M38 11.5h3M46 11.5h1M50 11.5h1M54 11.5h1M62 11.5h1M6 12.5h1M16 12.5h1M19 12.5h3M32 12.5h1M41 12.5h1M47 12.5h1M62 12.5h1M0 13.5h1M4 13.5h1M8 13.5h1M11 13.5h1M15 13.5h1M21 13.5h2M26 13.5h1M31 13.5h1M35 13.5h1M56 13.5h1M58 13.5h1M62 13.5h2M3 14.5h1M9 14.5h1M11 14.5h1M15 14.5h3M25 14.5h1M27 14.5h2M30 14.5h1M32 14.5h3M40 14.5h1M51 14.5h2M2 15.5h2M15 15.5h1M27 15.5h1M30 15.5h2M53 15.5h1M55 15.5h1M60 15.5h2M2 16.5h1M5 16.5h1M14 16.5h1M22 16.5h1M27 16.5h1M31 16.5h1M36 16.5h1M48 16.5h1M58 16.5h2M5 17.5h1M9 17.5h1M21 17.5h2M24 17.5h2M31 17.5h1M36 17.5h1M43 17.5h1M54 17.5h1M57 17.5h1M61 17.5h1M3 18.5h1M5 18.5h1M10 18.5h1M15 18.5h1M19 18.5h2M23 18.5h1M36 18.5h1M39 18.5h2M43 18.5h1M52 18.5h1M55 18.5h1M57 18.5h3M2 19.5h1M4 19.5h2M9 19.5h1M21 19.5h2M27 19.5h1M36 19.5h1M40 19.5h1M46 19.5h2M59 19.5h2M63 19.5h1M5 20.5h2M10 20.5h3M20 20.5h1M24 20.5h1M47 20.5h1M50 20.5h1M52 20.5h1M61 20.5h1M63 20.5h1M0 21.5h1M5 21.5h2M12 21.5h1M21 21.5h1M24 21.5h1M30 21.5h1M32 21.5h1M35 21.5h1M38 21.5h1M41 21.5h1M43 21.5h1M47 21.5h1M50 21.5h1M58 21.5h3M62 21.5h2M5 22.5h1M8 22.5h2M11 22.5h2M14 22.5h1M21 22.5h1M23 22.5h1M27 22.5h1M29 22.5h1M31 22.5h1M34 22.5h3M41 22.5h1M46 22.5h1M52 22.5h1M55 22.5h1M59 22.5h1M14 23.5h1M17 23.5h1M20 23.5h2M31 23.5h1M34 23.5h2M37 23.5h2M47 23.5h1M49 23.5h1M53 23.5h1M3 24.5h2M9 24.5h2M13 24.5h1M17 24.5h2M27 24.5h1M29 24.5h2M33 24.5h2M40 24.5h1M43 24.5h2M47 24.5h1M52 24.5h2M58 24.5h1M8 25.5h2M13 25.5h1M16 25.5h1M18 25.5h2M46 25.5h1M52 25.5h1M55 25.5h1M0 26.5h1M2 26.5h1M8 26.5h2M11 26.5h1M14 26.5h4M20 26.5h2M26 26.5h2M30 26.5h1M32 26.5h1M34 26.5h1M36 26.5h1M41 26.5h2M45 26.5h4M51 26.5h1M60 26.5h1M62 26.5h2M6 27.5h1M8 27.5h1M15 27.5h1M19 27.5h1M22 27.5h1M24 27.5h2M27 27.5h1M31 27.5h1M34 27.5h3M47 27.5h1M55 27.5h3M1 28.5h1M9 28.5h1M21 28.5h1M23 28.5h2M26 28.5h4M35 28.5h1M37 28.5h1M43 28.5h1M46 28.5h1M59 28.5h1M63 28.5h1M3 29.5h1M25 29.5h3M31 29.5h2M39 29.5h1M41 29.5h1M43 29.5h3M54 29.5h1M58 29.5h1M62 29.5h1M3 30.5h1M5 30.5h1M7 30.5h1M12 30.5h2M15 30.5h1M18 30.5h1M20 30.5h2M23 30.5h1M28 30.5h2M31 30.5h2M34 30.5h3M38 30.5h2M41 30.5h1M43 30.5h2M52 30.5h1M59 30.5h2M63 30.5h1M1 31.5h3M9 31.5h2M24 31.5h1M29 31.5h1M32 31.5h3M36 31.5h1M38 31.5h1M40 31.5h1M47 31.5h2M52 31.5h1M57 31.5h1M5 32.5h1M7 32.5h1M11 32.5h1M18 32.5h1M28 32.5h1M32 32.5h2M37 32.5h1M45 32.5h1M54 32.5h1M2 33.5h3M8 33.5h2M11 33.5h1M13 33.5h2M21 33.5h6M29 33.5h1M33 33.5h1M44 33.5h1M49 33.5h1M54 33.5h1M58 33.5h3M62 33.5h2M3 34.5h5M9 34.5h1M15 34.5h1M20 34.5h1M25 34.5h1M31 34.5h1M34 34.5h3M38 34.5h4M43 34.5h1M45 34.5h2M48 34.5h3M59 34.5h1M62 34.5h2M2 35.5h3M7 35.5h1M12 35.5h1M20 35.5h2M30 35.5h2M38 35.5h2M44 35.5h1M49 35.5h1M55 35.5h1M59 35.5h1M61 35.5h2M1 36.5h1M3 36.5h1M5 36.5h1M9 36.5h1M12 36.5h1M19 36.5h2M22 36.5h1M25 36.5h1M30 36.5h2M38 36.5h4M43 36.5h1M51 36.5h1M54 36.5h2M57 36.5h1M62 36.5h1M1 37.5h2M4 37.5h1M10 37.5h1M17 37.5h1M19 37.5h1M22 37.5h2M25 37.5h1M31 37.5h1M34 37.5h1M39 37.5h1M48 37.5h1M51 37.5h1M55 37.5h1M59 37.5h1M3 38.5h2M7 38.5h1M9 38.5h1M11 38.5h1M13 38.5h1M22 38.5h1M31 38.5h1M36 38.5h2M39 38.5h2M51 38.5h1M58 38.5h1M62 38.5h1M6 39.5h2M13 39.5h1M16 39.5h3M22 39.5h1M27 39.5h1M40 39.5h1M46 39.5h2M49 39.5h1M55 39.5h1M63 39.5h1M7 40.5h1M12 40.5h1M15 40.5h1M17 40.5h1M26 40.5h1M29 40.5h1M40 40.5h4M47 40.5h1M50 40.5h1M59 40.5h3M4 41.5h2M7 41.5h1M22 41.5h1M24 41.5h2M27 41.5h1M29 41.5h1M33 41.5h1M35 41.5h2M49 41.5h1M60 41.5h1M0 42.5h2M4 42.5h1M11 42.5h1M13 42.5h1M21 42.5h1M25 42.5h1M27 42.5h2M30 42.5h1M41 42.5h1M43 42.5h2M53 42.5h1M62 42.5h1M14 43.5h1M16 43.5h1M21 43.5h1M24 43.5h1M27 43.5h2M30 43.5h1M33 43.5h2M37 43.5h2M41 43.5h1M53 43.5h1M56 43.5h1M60 43.5h1M3 44.5h1M9 44.5h2M14 44.5h1M20 44.5h1M22 44.5h1M26 44.5h1M29 44.5h1M33 44.5h1M35 44.5h2M38 44.5h2M51 44.5h1M58 44.5h1M60 44.5h1M62 44.5h2M5 45.5h3M13 45.5h1M16 45.5h1M20 45.5h2M26 45.5h1M32 45.5h2M39 45.5h1M44 45.5h1M60 45.5h3M6 46.5h1M14 46.5h1M34 46.5h2M40 46.5h1M60 46.5h2M7 47.5h1M19 47.5h1M22 47.5h3M27 47.5h2M30 47.5h2M36 47.5h3M43 47.5h1M51 47.5h1M56 47.5h2M3 48.5h1M6 48.5h1M10 48.5h1M21 48.5h1M27 48.5h1M30 48.5h1M36 48.5h1M41 48.5h1M46 48.5h1M48 48.5h1M60 48.5h1M0 49.5h2M8 49.5h1M12 49.5h2M16 49.5h2M28 49.5h1M30 49.5h1M32 49.5h1M40 49.5h1M42 49.5h2M46 49.5h1M48 49.5h1M56 49.5h1M63 49.5h1M1 50.5h1M6 50.5h1M8 50.5h1M11 50.5h2M17 50.5h2M20 50.5h1M22 50.5h2M26 50.5h1M31 50.5h2M36 50.5h2M47 50.5h1M50 50.5h1M56 50.5h1M60 50.5h1M0 51.5h2M6 51.5h5M25 51.5h1M39 51.5h1M47 51.5h2M1 52.5h2M6 52.5h1M8 52.5h2M20 52.5h2M23 52.5h1M26 52.5h1M39 52.5h2M46 52.5h1M49 52.5h1M0 53.5h1M9 53.5h1M18 53.5h1M20 53.5h2M26 53.5h1M33 53.5h1M35 53.5h1M37 53.5h2M41 53.5h1M44 53.5h1M57 53.5h1M59 53.5h1M62 53.5h1M5 54.5h1M8 54.5h2M14 54.5h2M18 54.5h1M20 54.5h3M26 54.5h2M31 54.5h1M33 54.5h1M47 54.5h1M49 54.5h1M51 54.5h1M56 54.5h2M61 54.5h3M6 55.5h1M10 55.5h1M12 55.5h3M29 55.5h1M43 55.5h4M49 55.5h1M56 55.5h1M61 55.5h2M12 56.5h2M22 56.5h1M24 56.5h2M28 56.5h1M40 56.5h1M43 56.5h1M46 56.5h1M49 56.5h1M59 56.5h1M61 56.5h1M4 57.5h2M24 57.5h1M29 57.5h1M37 57.5h1M40 57.5h1M44 57.5h2M48 57.5h1M60 57.5h1M2 58.5h1M18 58.5h1M23 58.5h1M36 58.5h1M38 58.5h3M48 58.5h1M53 58.5h1M55 58.5h1M4 59.5h1M18 59.5h1M20 59.5h1M32 59.5h1M34 59.5h4M43 59.5h3M53 59.5h1M55 59.5h1M62 59.5h1M0 60.5h2M5 60.5h1M14 60.5h1M23 60.5h2M29 60.5h1M37 60.5h1M45 60.5h1M48 60.5h1M61 60.5h1M0 61.5h1M4 61.5h1M6 61.5h1M9 61.5h1M16 61.5h1M25 61.5h1M28 61.5h1M40 61.5h1M46 61.5h1M49 61.5h1M53 61.5h1M59 61.5h1M63 61.5h1M0 62.5h1M9 62.5h1M19 62.5h1M27 62.5h1M32 62.5h1M34 62.5h1M44 62.5h1M46 62.5h2M55 62.5h1M58 62.5h1M3 63.5h1M9 63.5h1M14 63.5h1M18 63.5h1M20 63.5h1M22 63.5h1M28 63.5h1M30 63.5h1M32 63.5h1M34 63.5h2M37 63.5h2M46 63.5h1M52 63.5h1M54 63.5h1M56 63.5h1M58 63.5h1M63 63.5h1" stroke="#40ee28" stroke-opacity="0.12"/><path d="M8 0.5h1M24 0.5h2M36 0.5h2M39 0.5h1M43 0.5h1M46 0.5h2M50 0.5h1M55 0.5h2M58 0.5h1M61 0.5h1M12 1.5h1M17 1.5h5M26 1.5h1M34 1.5h3M39 1.5h2M45 1.5h2M48 1.5h1M52 1.5h1M57 1.5h1M6 2.5h1M9 2.5h3M14 2.5h1M17 2.5h1M22 2.5h1M26 2.5h2M44 2.5h2M52 2.5h1M62 2.5h2M0 3.5h1M3 3.5h1M6 3.5h3M13 3.5h2M25 3.5h1M31 3.5h1M36 3.5h1M41 3.5h1M45 3.5h1M59 3.5h5M1 4.5h1M6 4.5h1M10 4.5h2M13 4.5h2M18 4.5h1M22 4.5h1M27 4.5h1M29 4.5h1M38 4.5h1M40 4.5h1M46 4.5h1M49 4.5h2M54 4.5h1M56 4.5h1M58 4.5h1M61 4.5h1M6 5.5h1M10 5.5h1M15 5.5h1M20 5.5h1M27 5.5h1M29 5.5h1M31 5.5h1M33 5.5h1M43 5.5h2M52 5.5h1M54 5.5h1M57 5.5h1M60 5.5h1M62 5.5h2M1 6.5h2M6 6.5h1M8 6.5h1M14 6.5h2M17 6.5h1M20 6.5h1M33 6.5h1M43 6.5h3M53 6.5h1M59 6.5h3M0 7.5h3M4 7.5h1M14 7.5h1M22 7.5h1M24 7.5h1M26 7.5h2M32 7.5h5M49 7.5h6M59 7.5h1M63 7.5h1M0 8.5h1M20 8.5h2M27 8.5h1M29 8.5h1M32 8.5h2M47 8.5h1M49 8.5h1M52 8.5h1M60 8.5h2M1 9.5h2M4 9.5h1M6 9.5h3M37 9.5h1M40 9.5h1M46 9.5h1M51 9.5h2M57 9.5h2M1 10.5h2M4 10.5h1M7 10.5h3M21 10.5h1M23 10.5h2M26 10.5h2M40 10.5h4M51 10.5h1M56 10.5h2M59 10.5h1M0 11.5h1M4 11.5h1M18 11.5h1M21 11.5h5M32 11.5h2M42 11.5h1M44 11.5h2M49 11.5h1M51 11.5h1M55 11.5h3M61 11.5h1M0 12.5h2M4 12.5h1M13 12.5h3M18 12.5h1M23 12.5h2M29 12.5h1M38 12.5h3M42 12.5h1M63 12.5h1M1 13.5h2M12 13.5h1M23 13.5h3M28 13.5h1M33 13.5h1M36 13.5h1M38 13.5h1M45 13.5h1M48 13.5h2M51 13.5h3M57 13.5h1M59 13.5h2M1 14.5h1M13 14.5h1M18 14.5h2M23 14.5h1M36 14.5h2M39 14.5h1M42 14.5h3M46 14.5h1M48 14.5h3M55 14.5h2M58 14.5h3M0 15.5h1M9 15.5h1M11 15.5h1M16 15.5h4M21 15.5h1M34 15.5h3M39 15.5h1M41 15.5h2M49 15.5h2M56 15.5h1M58 15.5h2M63 15.5h1M1 16.5h1M4 16.5h1M7 16.5h1M10 16.5h1M18 16.5h1M20 16.5h1M38 16.5h2M41 16.5h2M53 16.5h1M56 16.5h1M0 17.5h1M6 17.5h1M8 17.5h1M11 17.5h1M15 17.5h1M20 17.5h1M27 17.5h2M30 17.5h1M37 17.5h2M40 17.5h1M42 17.5h1M46 17.5h1M50 17.5h1M53 17.5h1M59 17.5h1M7 18.5h1M12 18.5h1M14 18.5h1M18 18.5h1M22 18.5h1M24 18.5h1M30 18.5h1M32 18.5h3M37 18.5h1M42 18.5h1M45 18.5h3M49 18.5h2M53 18.5h2M62 18.5h2M1 19.5h1M10 19.5h4M19 19.5h1M25 19.5h2M28 19.5h2M32 19.5h1M35 19.5h1M38 19.5h2M43 19.5h1M50 19.5h1M52 19.5h1M55 19.5h1M57 19.5h2M62 19.5h1M0 20.5h1M4 20.5h1M8 20.5h2M14 20.5h1M19 20.5h1M21 20.5h2M26 20.5h3M31 20.5h3M36 20.5h1M39 20.5h1M43 20.5h3M49 20.5h1M55 20.5h1M1 21.5h1M4 21.5h1M7 21.5h2M13 21.5h1M15 21.5h2M18 21.5h1M22 21.5h1M25 21.5h1M27 21.5h1M31 21.5h1M42 21.5h1M45 21.5h1M51 21.5h1M53 21.5h2M57 21.5h1M2 22.5h2M7 22.5h1M16 22.5h1M18 22.5h2M22 22.5h1M39 22.5h2M47 22.5h2M51 22.5h1M53 22.5h1M56 22.5h1M62 22.5h1M0 23.5h3M6 23.5h1M13 23.5h1M18 23.5h2M22 23.5h3M26 23.5h1M40 23.5h1M56 23.5h1M59 23.5h2M22 24.5h1M24 24.5h1M26 24.5h1M39 24.5h1M41 24.5h1M51 24.5h1M57 24.5h1M59 24.5h1M63 24.5h1M3 25.5h1M5 25.5h1M12 25.5h1M26 25.5h1M32 25.5h2M35 25.5h3M44 25.5h2M47 25.5h1M58 25.5h1M61 25.5h3M4 26.5h1M22 26.5h1M24 26.5h1M29 26.5h1M35 26.5h1M40 26.5h1M43 26.5h1M53 26.5h1M5 27.5h1M29 27.5h1M33 27.5h1M38 27.5h1M48 27.5h3M52 27.5h3M61 27.5h1M2 28.5h1M12 28.5h2M15 28.5h2M19 28.5h1M34 28.5h1M41 28.5h2M52 28.5h3M56 28.5h1M60 28.5h2M0 29.5h1M9 29.5h1M14 29.5h2M19 29.5h2M22 29.5h2M29 29.5h1M34 29.5h2M37 29.5h1M52 29.5h1M56 29.5h1M60 29.5h2M8 30.5h1M11 30.5h1M17 30.5h1M25 30.5h1M30 30.5h1M37 30.5h1M42 30.5h1M45 30.5h1M54 30.5h1M57 30.5h1M61 30.5h1M0 31.5h1M8 31.5h1M11 31.5h2M22 31.5h2M25 31.5h1M27 31.5h2M30 31.5h2M43 31.5h2M53 31.5h2M58 31.5h1M63 31.5h1M1 32.5h1M9 32.5h1M17 32.5h1M20 32.5h1M24 32.5h2M30 32.5h1M34 32.5h1M36 32.5h1M40 32.5h1M44 32.5h1M46 32.5h2M51 32.5h1M16 33.5h2M27 33.5h1M39 33.5h1M47 33.5h1M55 33.5h2M61 33.5h1M11 34.5h1M13 34.5h1M19 34.5h1M24 34.5h1M28 34.5h1M32 34.5h2M52 34.5h2M14 35.5h1M18 35.5h1M22 35.5h4M34 35.5h2M41 35.5h1M45 35.5h1M52 35.5h1M54 35.5h1M58 35.5h1M27 36.5h1M29 36.5h1M33 36.5h1M35 36.5h1M37 36.5h1M53 36.5h1M12 37.5h1M14 37.5h2M20 37.5h2M26 37.5h1M28 37.5h3M33 37.5h1M35 37.5h1M38 37.5h1M44 37.5h2M49 37.5h1M0 38.5h3M15 38.5h1M17 38.5h1M24 38.5h1M26 38.5h4M32 38.5h3M44 38.5h1M47 38.5h1M49 38.5h2M53 38.5h2M61 38.5h1M1 39.5h1M5 39.5h1M8 39.5h1M11 39.5h1M14 39.5h1M19 39.5h2M28 39.5h1M30 39.5h1M32 39.5h1M36 39.5h1M43 39.5h2M52 39.5h1M58 39.5h2M62 39.5h1M2 40.5h2M6 40.5h1M8 40.5h2M13 40.5h1M20 40.5h1M24 40.5h1M30 40.5h1M35 40.5h1M39 40.5h1M44 40.5h2M53 40.5h1M56 40.5h1M62 40.5h1M2 41.5h1M14 41.5h1M16 41.5h1M18 41.5h1M40 41.5h5M47 41.5h1M50 41.5h1M58 41.5h1M62 41.5h1M2 42.5h2M9 42.5h1M15 42.5h1M31 42.5h1M45 42.5h1M50 42.5h2M54 42.5h1M57 42.5h1M61 42.5h1M2 43.5h2M7 43.5h2M12 43.5h1M15 43.5h1M17 43.5h1M20 43.5h1M22 43.5h2M42 43.5h1M47 43.5h4M55 43.5h1M57 43.5h1M61 43.5h1M1 44.5h1M13 44.5h1M17 44.5h1M19 44.5h1M23 44.5h2M44 44.5h2M48 44.5h1M55 44.5h1M2 45.5h1M10 45.5h2M15 45.5h1M29 45.5h1M31 45.5h1M35 45.5h1M38 45.5h1M40 45.5h2M49 45.5h2M52 45.5h1M55 45.5h1M10 46.5h1M12 46.5h1M15 46.5h1M17 46.5h3M22 46.5h1M24 46.5h2M27 46.5h2M30 46.5h1M32 46.5h2M37 46.5h3M41 46.5h2M47 46.5h1M49 46.5h1M51 46.5h2M55 46.5h1M62 46.5h2M0 47.5h1M13 47.5h2M17 47.5h2M26 47.5h1M33 47.5h1M42 47.5h1M48 47.5h1M52 47.5h4M5 48.5h1M15 48.5h1M26 48.5h1M29 48.5h1M31 48.5h4M40 48.5h1M42 48.5h1M50 48.5h2M53 48.5h2M56 48.5h1M58 48.5h2M14 49.5h2M18 49.5h1M21 49.5h1M24 49.5h2M37 49.5h2M41 49.5h1M44 49.5h1M49 49.5h1M51 49.5h2M58 49.5h2M62 49.5h1M40 50.5h1M42 50.5h4M49 50.5h1M52 50.5h3M58 50.5h2M61 50.5h2M3 51.5h1M5 51.5h1M16 51.5h1M27 51.5h1M29 51.5h2M34 51.5h2M42 51.5h1M46 51.5h1M55 51.5h1M61 51.5h1M63 51.5h1M5 52.5h1M13 52.5h1M15 52.5h3M19 52.5h1M27 52.5h1M31 52.5h1M33 52.5h2M36 52.5h2M51 52.5h1M54 52.5h3M60 52.5h1M3 53.5h2M6 53.5h2M10 53.5h1M12 53.5h1M14 53.5h1M16 53.5h1M23 53.5h1M27 53.5h1M30 53.5h1M39 53.5h1M43 53.5h1M50 53.5h1M0 54.5h2M3 54.5h1M10 54.5h3M23 54.5h1M25 54.5h1M35 54.5h1M37 54.5h2M45 54.5h1M50 54.5h1M54 54.5h1M60 54.5h1M3 55.5h1M9 55.5h1M17 55.5h1M19 55.5h1M24 55.5h2M30 55.5h1M35 55.5h3M40 55.5h2M60 55.5h1M0 56.5h1M8 56.5h1M11 56.5h1M14 56.5h2M20 56.5h1M23 56.5h1M35 56.5h2M55 56.5h1M62 56.5h1M7 57.5h1M9 57.5h1M18 57.5h1M20 57.5h2M30 57.5h1M32 57.5h3M43 57.5h1M53 57.5h1M62 57.5h1M0 58.5h2M5 58.5h4M16 58.5h1M20 58.5h1M22 58.5h1M29 58.5h2M32 58.5h3M45 58.5h1M47 58.5h1M57 58.5h4M63 58.5h1M0 59.5h2M14 59.5h1M16 59.5h1M19 59.5h1M24 59.5h4M29 59.5h1M33 59.5h1M38 59.5h2M41 59.5h1M47 59.5h1M50 59.5h2M56 59.5h3M2 60.5h2M10 60.5h1M13 60.5h1M15 60.5h1M19 60.5h1M21 60.5h1M27 60.5h1M35 60.5h2M38 60.5h4M43 60.5h2M47 60.5h1M51 60.5h3M59 60.5h2M11 61.5h3M17 61.5h1M19 61.5h1M32 61.5h2M35 61.5h1M42 61.5h1M47 61.5h1M51 61.5h2M56 61.5h1M1 62.5h1M6 62.5h2M11 62.5h3M15 62.5h1M18 62.5h1M22 62.5h1M29 62.5h1M31 62.5h1M36 62.5h1M39 62.5h2M42 62.5h2M50 62.5h1M52 62.5h2M62 62.5h1M1 63.5h2M7 63.5h1M11 63.5h1M41 63.5h3M50 63.5h2M60 63.5h3" stroke="#ecc80c" stroke-opacity="0.12"/><path d="M5 0.5h1M16 0.5h2M45 0.5h1M57 0.5h1M2 1.5h1M7 1.5h1M16 1.5h1M43 1.5h1M53 1.5h1M56 1.5h1M12 2.5h2M28 2.5h1M17 3.5h1M53 4.5h1M57 4.5h1M60 4.5h1M13 5.5h1M32 5.5h1M61 5.5h1M0 6.5h1M12 6.5h1M32 6.5h1M36 6.5h1M39 6.5h1M51 6.5h1M29 7.5h1M22 8.5h2M26 8.5h1M35 8.5h2M55 8.5h1M23 9.5h1M26 9.5h1M39 9.5h1M47 9.5h1M22 10.5h1M37 10.5h1M58 10.5h1M58 11.5h1M5 12.5h1M28 12.5h1M30 12.5h1M33 12.5h2M43 12.5h1M45 12.5h1M51 12.5h1M57 12.5h3M9 13.5h1M18 13.5h1M29 13.5h2M39 13.5h1M44 13.5h1M54 13.5h1M20 14.5h1M57 14.5h1M20 15.5h1M23 15.5h2M45 15.5h2M57 15.5h1M0 16.5h1M11 16.5h2M19 16.5h1M21 16.5h1M34 16.5h1M50 16.5h1M1 17.5h1M7 17.5h1M12 17.5h1M14 17.5h1M2 18.5h1M29 18.5h1M34 19.5h1M41 19.5h1M56 19.5h1M13 20.5h1M25 20.5h1M42 20.5h1M46 20.5h1M56 20.5h1M19 21.5h1M28 21.5h1M37 21.5h1M36 24.5h1M56 24.5h1M4 25.5h1M38 25.5h1M33 26.5h1M37 26.5h1M57 26.5h1M4 27.5h1M28 27.5h1M14 28.5h1M17 28.5h1M33 28.5h1M39 28.5h2M4 29.5h1M13 29.5h1M16 29.5h2M51 29.5h1M57 29.5h1M9 30.5h1M22 30.5h1M51 30.5h1M58 30.5h1M17 31.5h1M51 31.5h1M23 32.5h1M43 32.5h1M50 32.5h1M60 32.5h1M52 33.5h1M17 34.5h2M22 34.5h2M55 34.5h4M5 35.5h1M33 35.5h1M42 35.5h1M56 35.5h2M0 36.5h1M7 36.5h1M14 36.5h1M34 36.5h1M36 36.5h1M44 36.5h2M7 37.5h1M36 37.5h2M61 37.5h1M14 38.5h1M42 38.5h2M48 38.5h1M0 39.5h1M2 39.5h3M9 39.5h1M33 39.5h3M53 39.5h2M61 39.5h1M4 40.5h2M19 40.5h1M21 40.5h1M36 40.5h1M52 40.5h1M8 41.5h1M17 41.5h1M55 41.5h1M8 42.5h1M10 42.5h1M46 42.5h1M49 42.5h1M1 43.5h1M19 43.5h1M44 43.5h2M58 43.5h1M0 44.5h1M18 44.5h1M30 45.5h1M47 45.5h2M53 45.5h1M2 46.5h1M11 46.5h1M29 46.5h1M48 46.5h1M50 46.5h1M53 46.5h2M29 47.5h1M39 47.5h1M45 47.5h1M16 48.5h2M23 48.5h1M38 48.5h2M49 48.5h1M5 49.5h1M19 49.5h2M22 49.5h2M34 49.5h1M50 49.5h1M54 49.5h1M57 49.5h1M14 50.5h2M41 50.5h1M57 50.5h1M15 51.5h1M17 51.5h2M33 51.5h1M44 51.5h2M57 51.5h1M59 51.5h1M62 51.5h1M4 52.5h1M12 52.5h1M29 52.5h2M43 52.5h1M47 52.5h1M58 52.5h1M62 52.5h1M24 53.5h1M28 53.5h2M51 53.5h2M16 54.5h1M29 54.5h2M39 54.5h1M41 54.5h1M52 54.5h1M38 55.5h2M53 55.5h2M6 56.5h2M63 56.5h1M0 57.5h1M6 57.5h1M8 57.5h1M11 57.5h4M28 57.5h1M35 57.5h1M41 57.5h1M55 57.5h1M10 58.5h2M19 58.5h1M21 58.5h1M25 58.5h1M27 58.5h2M35 58.5h1M41 58.5h1M46 58.5h1M49 58.5h1M61 58.5h1M10 59.5h2M61 59.5h1M11 60.5h1M20 60.5h1M42 60.5h1M55 60.5h4M15 61.5h1M18 61.5h1M27 61.5h1M57 61.5h1M60 61.5h1M5 62.5h1M10 62.5h1M21 62.5h1M24 62.5h1M41 62.5h1M61 62.5h1M5 63.5h2M8 63.5h1M12 63.5h1M23 63.5h2M36 63.5h1" stroke="#ecc80c" stroke-opacity="0.24"/><path d="M2 0.5h1M8 1.5h1M7 2.5h2M45 4.5h1M45 5.5h1M25 12.5h1M44 12.5h1M13 13.5h1M37 13.5h1M8 15.5h1M22 15.5h1M63 16.5h1M2 17.5h1M47 17.5h1M63 17.5h1M1 18.5h1M28 18.5h1M33 19.5h1M42 19.5h1M51 19.5h1M57 22.5h1M57 23.5h1M38 26.5h1M62 27.5h1M4 28.5h2M53 30.5h1M19 33.5h1M27 37.5h1M24 39.5h1M46 41.5h1M56 41.5h2M42 42.5h1M58 42.5h1M4 48.5h1M18 48.5h1M4 49.5h1M4 51.5h1M28 51.5h1M58 51.5h1M11 52.5h1M28 52.5h1M59 52.5h1M63 52.5h1M11 53.5h1M53 53.5h1M53 54.5h1M42 57.5h1M26 58.5h1M54 58.5h1M22 59.5h1M20 61.5h2M26 61.5h1" stroke="#ecc80c" stroke-opacity="0.36"/></g></pattern></defs>
<rect width="735" height="492" fill="#fff"/>

<rect x="20.90" y="11.10" width="34.50" height="73.20" fill="#f1f1f1" rx="0" />
<text transform="translate(45.80,28.30) rotate(-90) scale(0.945,1)" text-anchor="end" font-size="18.7" fill="#2b2b3a" stroke="#2b2b3a" stroke-width="0.5">LF</text>
<rect x="63.08" y="11.10" width="34.50" height="73.20" fill="#f1f1f1" rx="0" />
<text transform="translate(87.98,28.30) rotate(-90) scale(0.945,1)" text-anchor="end" font-size="18.7" fill="#2b2b3a" stroke="#2b2b3a" stroke-width="0.5">HF</text>
<rect x="105.26" y="11.10" width="34.50" height="73.20" fill="#00bbdd" rx="0" />
<text transform="translate(130.16,28.30) rotate(-90) scale(0.945,1)" text-anchor="end" font-size="18.7" fill="#fff" stroke="#fff" stroke-width="0.5">VHF</text>
<rect x="147.44" y="11.10" width="34.50" height="73.20" fill="#00bbdd" rx="0" />
<text transform="translate(172.34,28.30) rotate(-90) scale(0.945,1)" text-anchor="end" font-size="18.7" fill="#fff" stroke="#fff" stroke-width="0.5">UHF</text>
<rect x="189.62" y="11.10" width="34.50" height="73.20" fill="#f1f1f1" rx="0" />
<text transform="translate(214.52,28.30) rotate(-90) scale(0.945,1)" text-anchor="end" font-size="18.7" fill="#2b2b3a" stroke="#2b2b3a" stroke-width="0.5">SHF</text>
<rect x="231.80" y="11.10" width="34.50" height="73.20" fill="#f1f1f1" rx="0" />
<rect x="273.98" y="11.10" width="34.50" height="73.20" fill="#f1f1f1" rx="0" />
<rect x="17.00" y="92.00" width="706.00" height="385.00" fill="#fff" rx="0" />
<rect x="20.00" y="92.20" width="703.00" height="3.80" fill="url(#ts)" rx="0" />
<rect x="20.00" y="95.90" width="703.00" height="1.90" fill="#c9dbea" rx="0" />
<g clip-path="url(#cm)">
<text x="21.30" y="94.26" font-size="5.6" fill="#2a2a2a" font-weight="normal" textLength="6.60" lengthAdjust="spacingAndGlyphs" >▬</text>
<text x="35.00" y="94.26" font-size="5.6" fill="#2a2a2a" font-weight="normal" textLength="5.70" lengthAdjust="spacingAndGlyphs" >File</text>
<text x="48.70" y="94.26" font-size="5.6" fill="#2a2a2a" font-weight="normal" textLength="9.20" lengthAdjust="spacingAndGlyphs" >View</text>
<text x="64.00" y="94.26" font-size="5.6" fill="#2a2a2a" font-weight="normal" textLength="17.00" lengthAdjust="spacingAndGlyphs" >Markers</text>
<text x="90.00" y="94.26" font-size="5.6" fill="#2a2a2a" font-weight="normal" textLength="10.70" lengthAdjust="spacingAndGlyphs" >Setup</text>
<text x="110.00" y="94.26" font-size="5.6" fill="#2a2a2a" font-weight="normal" textLength="15.00" lengthAdjust="spacingAndGlyphs" >Presets</text>
<text x="135.00" y="94.26" font-size="5.6" fill="#2a2a2a" font-weight="normal" textLength="10.00" lengthAdjust="spacingAndGlyphs" >Tools</text>
<text x="152.70" y="94.26" font-size="5.6" fill="#2a2a2a" font-weight="normal" textLength="18.00" lengthAdjust="spacingAndGlyphs" >Connect</text>
<text x="179.00" y="94.26" font-size="5.6" fill="#2a2a2a" font-weight="normal" textLength="17.40" lengthAdjust="spacingAndGlyphs" >Window</text>
<text x="203.60" y="94.26" font-size="5.6" fill="#2a2a2a" font-weight="normal" textLength="8.40" lengthAdjust="spacingAndGlyphs" >Help</text>
</g>
<rect x="20.00" y="97.80" width="703.00" height="12.20" fill="#fff" rx="0" />
<rect x="20.00" y="110.00" width="350.00" height="348.30" fill="#fff" rx="0" />
<rect x="20.00" y="109.80" width="350.00" height="8.80" fill="url(#tb)" rx="0" />
<line x1="369.70" y1="110.00" x2="369.70" y2="458.30" stroke="#8fb8e6" stroke-width="1.2" />
<line x1="20.00" y1="458.30" x2="723.00" y2="458.30" stroke="#a9c8e8" stroke-width="1" />
<rect x="20.80" y="111.20" width="4.20" height="6.20" fill="#0c1e30" rx="0" />
<rect x="22.20" y="112.30" width="1.50" height="4.00" fill="#39c03c" rx="0" />
<text x="27.80" y="116.67" font-size="6.2" fill="#f4f8fe" font-weight="bold" textLength="30.70" lengthAdjust="spacingAndGlyphs" >Spectrogram</text>
<rect x="355.00" y="111.20" width="5.40" height="6.10" fill="#7db4ee" rx="0.8" />
<rect x="362.60" y="111.20" width="6.40" height="6.10" fill="#f0a35e" rx="0.8" />
<text x="356.50" y="116.17" font-size="4.5" fill="#e8f2fc" font-weight="normal" textLength="2.50" lengthAdjust="spacingAndGlyphs" >▫</text>
<text x="364.30" y="116.15" font-size="5" fill="#fbe3cf" font-weight="normal" textLength="3.00" lengthAdjust="spacingAndGlyphs" >x</text>
<rect x="371.00" y="110.00" width="350.00" height="348.30" fill="#fff" rx="0" />
<rect x="371.00" y="109.50" width="351.90" height="8.80" fill="url(#tg)" rx="0" />
<line x1="371.40" y1="110.00" x2="371.40" y2="458.30" stroke="#a9c8e8" stroke-width="1" />
<rect x="721.40" y="118.00" width="1.50" height="340.30" fill="#cdcfd2" rx="0" />
<line x1="720.60" y1="118.30" x2="720.60" y2="458.30" stroke="#dbe8f4" stroke-width="0.8" />
<rect x="372.60" y="111.50" width="5.70" height="5.40" fill="#0c0c0c" rx="0" />
<text x="374.00" y="116.01" font-size="4.6" fill="#d9c36a" font-weight="normal" textLength="3.00" lengthAdjust="spacingAndGlyphs" >/</text>
<text x="381.00" y="116.33" font-size="5.8" fill="#dcdcdc" font-weight="bold" textLength="21.20" lengthAdjust="spacingAndGlyphs" >Spectrum</text>
<rect x="707.50" y="111.50" width="4.80" height="5.80" fill="#c9c9c9" rx="0.8" />
<rect x="714.20" y="111.50" width="5.10" height="5.80" fill="#cdcdcd" rx="0.8" />
<g>
<rect x="70.00" y="129.00" width="289.90" height="318.20" fill="#0e58d8" rx="0" />
<rect x="298.50" y="129.00" width="61.40" height="318.20" fill="#0b32c8" rx="0" />
<line x1="312.50" y1="129.00" x2="312.50" y2="447.20" stroke="#1c66e0" stroke-width="0.9" />
<line x1="338.00" y1="129.00" x2="338.00" y2="447.20" stroke="#1a5cdc" stroke-width="0.9" />
</g>
<rect x="70.00" y="129.00" width="60.60" height="318.20" fill="url(#pb)" rx="0" />
<rect x="298.60" y="129.00" width="61.30" height="318.20" fill="url(#pb)" rx="0" />
<line x1="297.60" y1="129.00" x2="297.60" y2="447.20" stroke="#20a8e0" stroke-width="1.8" />
<linearGradient id="gu" gradientUnits="userSpaceOnUse" x1="138" y1="0" x2="297" y2="0"><stop offset="0.000" stop-color="#b8d612"/><stop offset="0.088" stop-color="#b0dc12"/><stop offset="0.170" stop-color="#8ce814"/><stop offset="0.239" stop-color="#58ea1e"/><stop offset="0.308" stop-color="#8ce814"/><stop offset="0.384" stop-color="#a8e212"/><stop offset="0.453" stop-color="#90e814"/><stop offset="0.522" stop-color="#5cea1e"/><stop offset="0.591" stop-color="#8ce814"/><stop offset="0.686" stop-color="#a8e212"/><stop offset="0.767" stop-color="#88e814"/><stop offset="0.843" stop-color="#58ea22"/><stop offset="0.925" stop-color="#5cea1e"/><stop offset="0.969" stop-color="#4cea2e"/><stop offset="1.000" stop-color="#0ce260"/></linearGradient>
<linearGradient id="gl" gradientUnits="userSpaceOnUse" x1="138" y1="0" x2="297" y2="0"><stop offset="0.000" stop-color="#bcd212"/><stop offset="0.088" stop-color="#bcd412"/><stop offset="0.189" stop-color="#a0e412"/><stop offset="0.327" stop-color="#96e614"/><stop offset="0.421" stop-color="#88e814"/><stop offset="0.509" stop-color="#5cea24"/><stop offset="0.579" stop-color="#7cea16"/><stop offset="0.686" stop-color="#a0e412"/><stop offset="0.755" stop-color="#88e814"/><stop offset="0.818" stop-color="#5cea20"/><stop offset="0.912" stop-color="#84ea14"/><stop offset="0.969" stop-color="#4cea2e"/><stop offset="1.000" stop-color="#0ce260"/></linearGradient>
<g>
<rect x="130.60" y="129.00" width="7.70" height="318.20" fill="url(#gtr)" rx="0" />
<rect x="138.30" y="129.00" width="158.60" height="232.00" fill="url(#gu)" rx="0" />
<rect x="138.30" y="361.00" width="158.60" height="86.20" fill="url(#gl)" rx="0" />
<g clip-path="url(#cy)"><g filter="url(#bl6)">
<ellipse cx="179" cy="316" rx="9" ry="30" fill="#18dc60" opacity="1"/>
<ellipse cx="174" cy="240" rx="8" ry="22" fill="#3ce438" opacity="0.75"/>
<ellipse cx="222" cy="190" rx="8" ry="32" fill="#40e434" opacity="0.75"/>
<ellipse cx="272" cy="165" rx="10" ry="30" fill="#34e23c" opacity="0.8"/>
<ellipse cx="266" cy="270" rx="8" ry="18" fill="#40e434" opacity="0.6"/>
<ellipse cx="223" cy="300" rx="7" ry="30" fill="#54e42c" opacity="0.45"/>
<ellipse cx="146" cy="200" rx="8" ry="48" fill="#e4c818" opacity="0.7"/>
<ellipse cx="197" cy="200" rx="9" ry="30" fill="#dcd416" opacity="0.65"/>
<ellipse cx="243" cy="315" rx="10" ry="34" fill="#e0cc16" opacity="0.7"/>
<ellipse cx="248" cy="235" rx="8" ry="30" fill="#d4d018" opacity="0.5"/>
</g></g>
<g clip-path="url(#cy2)"><g filter="url(#bl6)">
<ellipse cx="150" cy="388" rx="11" ry="16" fill="#e8bc1a" opacity="0.7"/>
<ellipse cx="218" cy="372" rx="8" ry="14" fill="#1cdc58" opacity="0.85"/>
<ellipse cx="220" cy="420" rx="7" ry="25" fill="#48e430" opacity="0.6"/>
<ellipse cx="240" cy="402" rx="9" ry="16" fill="#d8cc18" opacity="0.45"/>
<ellipse cx="190" cy="410" rx="10" ry="25" fill="#c0dc18" opacity="0.3"/>
</g></g>
</g>
<rect x="133.00" y="129.00" width="163.90" height="318.20" fill="url(#py)" rx="0" />
<line x1="137.70" y1="129.00" x2="137.70" y2="447.20" stroke="#5c6c16" stroke-width="0.6" />
<rect x="74.00" y="132.70" width="47.60" height="4.30" fill="#c8daf2" rx="0" />
<text x="75.00" y="136.23" font-size="3.8" fill="#4a5878" font-weight="normal" textLength="45.60" lengthAdjust="spacingAndGlyphs" >2/4/2016 11:57:51.285474</text>
<line x1="68.30" y1="129.00" x2="69.60" y2="129.00" stroke="#999" stroke-width="0.5" />
<line x1="68.30" y1="160.82" x2="69.60" y2="160.82" stroke="#999" stroke-width="0.5" />
<line x1="68.30" y1="192.64" x2="69.60" y2="192.64" stroke="#999" stroke-width="0.5" />
<line x1="68.30" y1="224.46" x2="69.60" y2="224.46" stroke="#999" stroke-width="0.5" />
<line x1="68.30" y1="256.28" x2="69.60" y2="256.28" stroke="#999" stroke-width="0.5" />
<line x1="68.30" y1="288.10" x2="69.60" y2="288.10" stroke="#999" stroke-width="0.5" />
<line x1="68.30" y1="319.92" x2="69.60" y2="319.92" stroke="#999" stroke-width="0.5" />
<line x1="68.30" y1="351.74" x2="69.60" y2="351.74" stroke="#999" stroke-width="0.5" />
<line x1="68.30" y1="383.56" x2="69.60" y2="383.56" stroke="#999" stroke-width="0.5" />
<line x1="68.30" y1="415.38" x2="69.60" y2="415.38" stroke="#999" stroke-width="0.5" />
<line x1="68.30" y1="447.20" x2="69.60" y2="447.20" stroke="#999" stroke-width="0.5" />
<text x="74.30" y="444.55" font-size="5" fill="#e8f0ff" font-weight="bold" textLength="2.30" lengthAdjust="spacingAndGlyphs" >T</text>
<line x1="66.60" y1="441.50" x2="66.60" y2="447.00" stroke="#e04040" stroke-width="0.7" />
<line x1="65.60" y1="447.00" x2="67.60" y2="447.00" stroke="#e04040" stroke-width="0.6" />
<rect x="362.60" y="129.00" width="4.60" height="318.50" fill="#f8f8fa" rx="0" />
<rect x="362.00" y="395.40" width="4.60" height="44.80" fill="#dddbe0" rx="1" />
<text x="363.80" y="132.92" font-size="3.2" fill="#999" font-weight="normal" textLength="2.40" lengthAdjust="spacingAndGlyphs" >▴</text>
<text x="363.80" y="445.52" font-size="3.2" fill="#999" font-weight="normal" textLength="2.40" lengthAdjust="spacingAndGlyphs" >▾</text>
<text x="55.00" y="125.62" font-size="5.2" fill="#555" font-weight="normal" textLength="34.70" lengthAdjust="spacingAndGlyphs" >Spectrums/line: 1</text>
<text x="109.00" y="125.62" font-size="5.2" fill="#555" font-weight="normal" textLength="12.40" lengthAdjust="spacingAndGlyphs" >+Peak</text>
<rect x="353.60" y="119.70" width="13.60" height="6.60" fill="url(#btn)" stroke="#b4c8d4" stroke-width="0.6" rx="0.8" />
<text x="356.30" y="124.58" font-size="4.8" fill="#333" font-weight="normal" textLength="8.70" lengthAdjust="spacingAndGlyphs" >Clear</text>
<text x="25.00" y="132.12" font-size="5.2" fill="#555" font-weight="normal" textLength="17.50" lengthAdjust="spacingAndGlyphs" >Time/div:</text>
<rect x="24.00" y="133.40" width="24.80" height="7.20" fill="#f2f8ff" stroke="#86b6ee" stroke-width="0.7" rx="0.6" />
<rect x="25.00" y="134.50" width="19.50" height="5.00" fill="#3c82e4" rx="0" />
<text x="26.00" y="138.75" font-size="5" fill="#e8f1ff" font-weight="normal" textLength="17.00" lengthAdjust="spacingAndGlyphs" >1.00 sec</text>
<text x="20.80" y="136.95" font-size="5" fill="#444" font-weight="normal" textLength="2.00" lengthAdjust="spacingAndGlyphs" >•</text>
<text x="25.00" y="145.42" font-size="5.2" fill="#555" font-weight="normal" textLength="9.00" lengthAdjust="spacingAndGlyphs" >RBW:</text>
<text x="20.80" y="150.25" font-size="5" fill="#444" font-weight="normal" textLength="2.00" lengthAdjust="spacingAndGlyphs" >•</text>
<text x="26.50" y="151.52" font-size="5.2" fill="#555" font-weight="normal" textLength="17.00" lengthAdjust="spacingAndGlyphs" >3.00 kHz</text>
<rect x="21.20" y="154.80" width="5.00" height="5.00" fill="#fafcff" stroke="#6f9fd8" stroke-width="0.7" rx="0.5" />
<text x="28.30" y="159.32" font-size="5.2" fill="#555" font-weight="normal" textLength="10.70" lengthAdjust="spacingAndGlyphs" >VBW:</text>
<rect x="21.20" y="170.40" width="5.00" height="5.00" fill="#fafcff" stroke="#6f9fd8" stroke-width="0.7" rx="0.5" />
<text x="28.30" y="174.82" font-size="5.2" fill="#555" font-weight="normal" textLength="5.90" lengthAdjust="spacingAndGlyphs" >3-D</text>
<text x="24.70" y="438.18" font-size="4.8" fill="#555" font-weight="normal" textLength="5.50" lengthAdjust="spacingAndGlyphs" >Pos:</text>
<text x="20.80" y="443.55" font-size="5" fill="#444" font-weight="normal" textLength="2.00" lengthAdjust="spacingAndGlyphs" >•</text>
<text x="25.60" y="444.82" font-size="5.2" fill="#555" font-weight="normal" textLength="22.10" lengthAdjust="spacingAndGlyphs" >120.0 mdiv</text>
<rect x="22.00" y="449.40" width="25.80" height="6.90" fill="url(#btn)" stroke="#7fa6d8" stroke-width="0.6" rx="0.8" />
<text x="24.60" y="454.58" font-size="4.8" fill="#555" font-weight="normal" textLength="20.60" lengthAdjust="spacingAndGlyphs" >Autoscale</text>
<text x="53.00" y="454.65" font-size="5" fill="#444" font-weight="normal" textLength="2.00" lengthAdjust="spacingAndGlyphs" >•</text>
<text x="58.70" y="454.52" font-size="5.2" fill="#555" font-weight="normal" textLength="7.30" lengthAdjust="spacingAndGlyphs" >CF:</text>
<text x="73.40" y="454.45" font-size="5" fill="#555" font-weight="normal" textLength="23.00" lengthAdjust="spacingAndGlyphs" >527.00 MHz</text>
<text x="304.30" y="454.65" font-size="5" fill="#444" font-weight="normal" textLength="2.00" lengthAdjust="spacingAndGlyphs" >•</text>
<text x="310.00" y="454.52" font-size="5.2" fill="#555" font-weight="normal" textLength="9.40" lengthAdjust="spacingAndGlyphs" >Span:</text>
<text x="324.40" y="454.45" font-size="5" fill="#555" font-weight="normal" textLength="20.30" lengthAdjust="spacingAndGlyphs" >10.00 MHz</text>
<rect x="421.00" y="128.60" width="292.40" height="316.80" fill="#fff" rx="0" />
<line x1="421.00" y1="128.60" x2="421.00" y2="445.40" stroke="#dfe1e4" stroke-width="0.6" />
<line x1="421.00" y1="128.60" x2="713.40" y2="128.60" stroke="#dfe1e4" stroke-width="0.6" />
<line x1="450.24" y1="128.60" x2="450.24" y2="445.40" stroke="#dfe1e4" stroke-width="0.6" />
<line x1="421.00" y1="160.28" x2="713.40" y2="160.28" stroke="#dfe1e4" stroke-width="0.6" />
<line x1="479.48" y1="128.60" x2="479.48" y2="445.40" stroke="#dfe1e4" stroke-width="0.6" />
<line x1="421.00" y1="191.96" x2="713.40" y2="191.96" stroke="#dfe1e4" stroke-width="0.6" />
<line x1="508.72" y1="128.60" x2="508.72" y2="445.40" stroke="#dfe1e4" stroke-width="0.6" />
<line x1="421.00" y1="223.64" x2="713.40" y2="223.64" stroke="#dfe1e4" stroke-width="0.6" />
<line x1="537.96" y1="128.60" x2="537.96" y2="445.40" stroke="#dfe1e4" stroke-width="0.6" />
<line x1="421.00" y1="255.32" x2="713.40" y2="255.32" stroke="#dfe1e4" stroke-width="0.6" />
<line x1="567.20" y1="128.60" x2="567.20" y2="445.40" stroke="#dfe1e4" stroke-width="0.6" />
<line x1="421.00" y1="287.00" x2="713.40" y2="287.00" stroke="#dfe1e4" stroke-width="0.6" />
<line x1="596.44" y1="128.60" x2="596.44" y2="445.40" stroke="#dfe1e4" stroke-width="0.6" />
<line x1="421.00" y1="318.68" x2="713.40" y2="318.68" stroke="#dfe1e4" stroke-width="0.6" />
<line x1="625.68" y1="128.60" x2="625.68" y2="445.40" stroke="#dfe1e4" stroke-width="0.6" />
<line x1="421.00" y1="350.36" x2="713.40" y2="350.36" stroke="#dfe1e4" stroke-width="0.6" />
<line x1="654.92" y1="128.60" x2="654.92" y2="445.40" stroke="#dfe1e4" stroke-width="0.6" />
<line x1="421.00" y1="382.04" x2="713.40" y2="382.04" stroke="#dfe1e4" stroke-width="0.6" />
<line x1="684.16" y1="128.60" x2="684.16" y2="445.40" stroke="#dfe1e4" stroke-width="0.6" />
<line x1="421.00" y1="413.72" x2="713.40" y2="413.72" stroke="#dfe1e4" stroke-width="0.6" />
<line x1="713.40" y1="128.60" x2="713.40" y2="445.40" stroke="#dfe1e4" stroke-width="0.6" />
<line x1="421.00" y1="445.40" x2="713.40" y2="445.40" stroke="#dfe1e4" stroke-width="0.6" />
<path d="M421.00,313.41 L421.40,304.78 L421.59,313.75 L421.88,301.52 L422.17,300.17 L422.46,296.10 L422.76,297.92 L423.05,309.55 L423.34,294.79 L423.63,309.84 L423.93,296.30 L424.22,297.47 L424.51,295.25 L424.81,306.20 L425.10,298.18 L425.39,306.68 L425.68,301.13 L425.98,297.38 L426.27,307.46 L426.56,300.09 L426.85,295.24 L427.15,290.99 L427.44,289.97 L427.73,299.16 L428.02,299.95 L428.32,301.37 L428.61,299.26 L428.90,299.09 L429.20,299.43 L429.49,295.97 L429.78,301.13 L430.07,294.37 L430.37,300.03 L430.66,301.02 L430.95,297.58 L431.24,298.26 L431.54,295.40 L431.83,291.90 L432.12,300.37 L432.42,287.41 L432.71,296.64 L433.00,296.54 L433.29,298.13 L433.59,290.73 L433.88,295.90 L434.17,296.26 L434.46,310.76 L434.76,285.01 L435.05,296.18 L435.34,314.57 L435.63,311.97 L435.93,305.46 L436.22,298.42 L436.51,305.35 L436.81,297.18 L437.10,303.29 L437.39,303.79 L437.68,288.35 L437.98,298.61 L438.27,304.63 L438.56,316.44 L438.85,298.68 L439.15,302.45 L439.44,308.99 L439.73,300.85 L440.03,297.99 L440.32,296.95 L440.61,300.87 L440.90,296.20 L441.20,304.68 L441.49,309.17 L441.78,312.69 L442.07,298.13 L442.37,308.62 L442.66,289.04 L442.95,299.07 L443.24,301.12 L443.54,306.93 L443.83,311.50 L444.12,312.39 L444.42,291.32 L444.71,303.67 L445.00,301.93 L445.29,302.31 L445.59,297.50 L445.88,300.30 L446.17,298.32 L446.46,300.58 L446.76,303.03 L447.05,290.69 L447.34,300.19 L447.64,296.91 L447.93,313.88 L448.22,293.64 L448.51,304.62 L448.81,305.03 L449.10,298.01 L449.39,294.49 L449.68,311.24 L449.98,313.50 L450.27,286.78 L450.56,304.15 L450.85,300.68 L451.15,314.73 L451.44,308.55 L451.73,303.17 L452.03,306.80 L452.32,299.19 L452.61,307.31 L452.90,307.57 L453.20,310.08 L453.49,299.03 L453.78,300.48 L454.07,303.43 L454.37,303.75 L454.66,300.62 L454.95,306.89 L455.25,300.19 L455.54,303.11 L455.83,303.74 L456.12,300.29 L456.42,308.84 L456.71,298.47 L457.00,300.52 L457.29,295.97 L457.59,304.71 L457.88,307.52 L458.17,300.72 L458.46,300.15 L458.76,302.92 L459.05,302.44 L459.34,303.31 L459.64,301.04 L459.93,306.32 L460.22,318.28 L460.51,297.14 L460.81,300.21 L461.10,300.50 L461.39,299.63 L461.68,300.03 L461.98,305.68 L462.27,300.65 L462.56,295.21 L462.86,292.73 L463.15,305.97 L463.44,308.23 L463.73,293.43 L464.03,293.15 L464.32,305.38 L464.61,290.94 L464.90,302.69 L465.20,295.32 L465.49,291.93 L465.78,289.04 L466.07,298.50 L466.37,292.34 L466.66,298.38 L466.95,301.00 L467.25,306.09 L467.54,297.25 L467.83,292.57 L468.12,293.04 L468.42,300.20 L468.71,306.21 L469.00,295.92 L469.29,293.96 L469.59,301.32 L469.88,303.24 L470.17,304.96 L470.47,296.51 L470.76,295.10 L471.05,296.17 L471.34,286.72 L471.64,296.94 L471.93,298.09 L472.22,297.60 L472.51,288.23 L472.81,302.42 L473.10,307.12 L473.39,293.84 L473.68,306.59 L473.98,297.48 L474.27,307.91 L474.56,305.27 L474.86,294.24 L475.15,297.41 L475.44,289.85 L475.73,289.29 L476.03,297.13 L476.32,292.15 L476.61,301.04 L476.90,296.71 L477.20,303.20 L477.49,297.44 L477.78,300.11 L478.08,301.68 L478.37,317.25 L478.66,288.61 L478.95,297.16 L479.25,300.97 L479.54,298.56 L479.83,293.29 L480.12,303.82 L480.42,300.92 L480.71,301.44 L481.00,294.88 L481.29,306.43 L481.59,293.33 L481.88,295.81 L482.17,296.30 L482.47,299.14 L482.76,292.69 L483.05,302.82 L483.34,288.97 L483.64,302.76 L483.93,293.47 L484.22,293.44 L484.51,292.87 L484.81,281.63 L485.10,282.16 L485.39,274.27 L485.69,290.51 L485.98,285.91 L486.27,310.16 L486.56,280.65 L486.86,285.98 L487.15,278.71 L487.44,284.58 L487.73,271.98 L488.03,272.36 L488.32,271.48 L488.61,277.70 L488.90,264.53 L489.20,267.27 L489.49,261.49 L489.78,272.09 L490.08,257.13 L490.37,239.72 L490.66,252.77 L490.95,261.44 L491.25,239.41 L491.54,251.72 L491.83,260.16 L492.12,260.22 L492.42,246.66 L492.71,249.29 L493.00,248.62 L493.30,259.76 L493.59,251.43 L493.88,249.77 L494.17,247.22 L494.47,254.18 L494.76,258.10 L495.05,254.89 L495.34,254.95 L495.64,250.93 L495.93,250.26 L496.22,257.62 L496.51,249.81 L496.81,240.96 L497.10,244.83 L497.39,259.83 L497.69,252.48 L497.98,251.61 L498.27,256.28 L498.56,250.69 L498.86,247.46 L499.15,252.70 L499.44,256.86 L499.73,244.82 L500.03,245.19 L500.32,259.11 L500.61,257.81 L500.91,246.59 L501.20,252.57 L501.49,263.39 L501.78,256.57 L502.08,242.02 L502.37,257.81 L502.66,267.97 L502.95,247.13 L503.25,252.58 L503.54,248.22 L503.83,248.33 L504.12,240.01 L504.42,246.30 L504.71,249.33 L505.00,254.84 L505.30,245.34 L505.59,255.73 L505.88,246.83 L506.17,253.33 L506.47,246.91 L506.76,255.73 L507.05,260.87 L507.34,246.59 L507.64,249.84 L507.93,246.05 L508.22,257.90 L508.52,254.83 L508.81,237.98 L509.10,248.08 L509.39,250.74 L509.69,252.87 L509.98,255.49 L510.27,247.09 L510.56,250.41 L510.86,245.69 L511.15,250.59 L511.44,255.90 L511.73,255.87 L512.03,248.82 L512.32,243.69 L512.61,245.13 L512.91,242.12 L513.20,262.34 L513.49,249.93 L513.78,260.33 L514.08,251.59 L514.37,251.00 L514.66,258.12 L514.95,251.20 L515.25,256.32 L515.54,251.42 L515.83,259.75 L516.13,248.51 L516.42,263.30 L516.71,245.61 L517.00,243.56 L517.30,257.96 L517.59,253.75 L517.88,255.10 L518.17,248.22 L518.47,250.54 L518.76,252.16 L519.05,246.99 L519.34,242.25 L519.64,259.67 L519.93,258.64 L520.22,248.79 L520.52,244.83 L520.81,246.94 L521.10,261.32 L521.39,253.13 L521.69,251.39 L521.98,245.66 L522.27,238.57 L522.56,245.78 L522.86,248.24 L523.15,252.39 L523.44,252.63 L523.74,259.14 L524.03,251.92 L524.32,252.67 L524.61,250.23 L524.91,251.43 L525.20,239.02 L525.49,256.14 L525.78,245.50 L526.08,244.01 L526.37,254.43 L526.66,249.98 L526.95,252.76 L527.25,259.38 L527.54,251.21 L527.83,250.88 L528.13,248.00 L528.42,259.78 L528.71,248.37 L529.00,242.42 L529.30,253.96 L529.59,245.94 L529.88,253.05 L530.17,251.66 L530.47,252.27 L530.76,247.86 L531.05,247.13 L531.35,246.82 L531.64,249.45 L531.93,243.14 L532.22,255.19 L532.52,258.72 L532.81,255.54 L533.10,251.12 L533.39,250.48 L533.69,245.30 L533.98,259.47 L534.27,243.54 L534.56,257.14 L534.86,256.47 L535.15,247.18 L535.44,246.44 L535.74,253.95 L536.03,256.32 L536.32,252.76 L536.61,248.99 L536.91,252.93 L537.20,253.03 L537.49,252.12 L537.78,247.75 L538.08,254.13 L538.37,248.83 L538.66,244.71 L538.96,254.63 L539.25,253.15 L539.54,270.25 L539.83,261.41 L540.13,260.10 L540.42,250.53 L540.71,250.38 L541.00,255.04 L541.30,253.07 L541.59,245.95 L541.88,263.45 L542.17,253.89 L542.47,246.15 L542.76,249.11 L543.05,246.25 L543.35,258.80 L543.64,258.80 L543.93,250.44 L544.22,243.69 L544.52,250.15 L544.81,252.69 L545.10,267.01 L545.39,263.35 L545.69,252.29 L545.98,247.26 L546.27,251.65 L546.57,253.75 L546.86,248.60 L547.15,248.12 L547.44,258.35 L547.74,249.20 L548.03,250.25 L548.32,241.46 L548.61,248.31 L548.91,247.36 L549.20,253.87 L549.49,243.55 L549.78,247.64 L550.08,247.70 L550.37,252.47 L550.66,254.45 L550.96,254.28 L551.25,238.86 L551.54,249.60 L551.83,244.67 L552.13,255.10 L552.42,249.43 L552.71,256.82 L553.00,244.82 L553.30,243.23 L553.59,255.24 L553.88,257.85 L554.18,247.68 L554.47,258.04 L554.76,258.41 L555.05,252.42 L555.35,267.04 L555.64,245.39 L555.93,250.70 L556.22,252.68 L556.52,246.14 L556.81,260.26 L557.10,249.52 L557.39,242.61 L557.69,253.44 L557.98,261.14 L558.27,253.63 L558.57,260.13 L558.86,248.42 L559.15,252.16 L559.44,252.92 L559.74,250.10 L560.03,245.98 L560.32,258.44 L560.61,243.37 L560.91,248.76 L561.20,243.49 L561.49,254.20 L561.79,255.27 L562.08,235.59 L562.37,249.49 L562.66,244.50 L562.96,241.18 L563.25,254.09 L563.54,244.76 L563.83,258.86 L564.13,260.32 L564.42,246.42 L564.71,264.07 L565.00,255.16 L565.30,261.33 L565.59,258.50 L565.88,251.63 L566.18,252.18 L566.47,250.86 L566.76,263.29 L567.05,253.71 L567.35,261.26 L567.64,262.92 L567.93,266.41 L568.22,252.13 L568.52,256.91 L568.81,258.88 L569.10,276.77 L569.40,265.25 L569.69,267.36 L569.98,253.16 L570.27,258.23 L570.57,266.20 L570.86,262.04 L571.15,258.66 L571.44,263.66 L571.74,256.76 L572.03,253.39 L572.32,253.44 L572.61,253.22 L572.91,251.43 L573.20,264.28 L573.49,254.46 L573.79,254.68 L574.08,244.80 L574.37,251.39 L574.66,247.23 L574.96,253.99 L575.25,252.93 L575.54,252.48 L575.83,249.83 L576.13,248.02 L576.42,250.53 L576.71,248.64 L577.01,247.42 L577.30,255.18 L577.59,246.78 L577.88,256.27 L578.18,249.35 L578.47,251.56 L578.76,260.31 L579.05,259.15 L579.35,247.97 L579.64,270.15 L579.93,243.85 L580.22,252.32 L580.52,267.00 L580.81,261.34 L581.10,258.33 L581.40,254.88 L581.69,263.22 L581.98,254.07 L582.27,244.78 L582.57,254.96 L582.86,262.90 L583.15,251.15 L583.44,252.20 L583.74,249.13 L584.03,263.86 L584.32,261.50 L584.62,259.87 L584.91,264.75 L585.20,253.72 L585.49,253.15 L585.79,265.56 L586.08,264.40 L586.37,252.77 L586.66,243.78 L586.96,249.85 L587.25,249.23 L587.54,250.42 L587.83,245.12 L588.13,243.24 L588.42,273.80 L588.71,249.71 L589.01,265.14 L589.30,246.52 L589.59,243.76 L589.88,240.77 L590.18,250.78 L590.47,248.71 L590.76,252.42 L591.05,255.94 L591.35,251.98 L591.64,262.92 L591.93,264.64 L592.23,247.84 L592.52,263.72 L592.81,247.51 L593.10,244.49 L593.40,252.98 L593.69,248.78 L593.98,250.46 L594.27,250.00 L594.57,264.11 L594.86,253.86 L595.15,249.54 L595.44,252.78 L595.74,258.32 L596.03,274.72 L596.32,249.57 L596.62,260.75 L596.91,264.74 L597.20,250.59 L597.49,250.55 L597.79,254.20 L598.08,248.14 L598.37,249.15 L598.66,246.55 L598.96,249.28 L599.25,254.30 L599.54,250.40 L599.84,251.99 L600.13,251.81 L600.42,237.55 L600.71,238.98 L601.01,251.37 L601.30,247.09 L601.59,254.86 L601.88,257.02 L602.18,256.58 L602.47,242.76 L602.76,256.79 L603.05,234.86 L603.35,248.52 L603.64,253.16 L603.93,252.12 L604.23,249.44 L604.52,250.21 L604.81,259.96 L605.10,257.27 L605.40,244.80 L605.69,249.00 L605.98,251.50 L606.27,246.81 L606.57,255.32 L606.86,247.14 L607.15,260.13 L607.45,245.93 L607.74,261.42 L608.03,248.16 L608.32,236.31 L608.62,247.94 L608.91,245.21 L609.20,252.09 L609.49,261.11 L609.79,247.91 L610.08,251.04 L610.37,248.85 L610.66,238.44 L610.96,246.82 L611.25,255.34 L611.54,248.78 L611.84,258.03 L612.13,248.56 L612.42,252.92 L612.71,252.98 L613.01,257.82 L613.30,255.12 L613.59,253.97 L613.88,261.05 L614.18,249.50 L614.47,255.75 L614.76,257.47 L615.06,251.72 L615.35,248.01 L615.64,271.11 L615.93,256.62 L616.23,247.62 L616.52,255.53 L616.81,254.96 L617.10,247.30 L617.40,260.24 L617.69,251.58 L617.98,243.73 L618.27,248.60 L618.57,251.09 L618.86,261.19 L619.15,251.10 L619.45,248.61 L619.74,257.97 L620.03,248.12 L620.32,251.27 L620.62,249.99 L620.91,254.67 L621.20,266.27 L621.49,261.35 L621.79,252.19 L622.08,260.34 L622.37,263.81 L622.67,249.28 L622.96,251.60 L623.25,248.95 L623.54,250.91 L623.84,248.10 L624.13,244.26 L624.42,249.05 L624.71,260.12 L625.01,253.80 L625.30,266.54 L625.59,252.64 L625.88,262.84 L626.18,239.67 L626.47,247.82 L626.76,253.51 L627.06,243.95 L627.35,271.20 L627.64,257.56 L627.93,263.64 L628.23,256.46 L628.52,261.33 L628.81,262.63 L629.10,253.55 L629.40,256.05 L629.69,255.46 L629.98,264.44 L630.28,251.58 L630.57,255.81 L630.86,257.77 L631.15,248.07 L631.45,254.88 L631.74,245.92 L632.03,255.97 L632.32,247.87 L632.62,265.44 L632.91,239.14 L633.20,252.09 L633.49,247.53 L633.79,264.06 L634.08,248.76 L634.37,253.98 L634.67,245.28 L634.96,248.92 L635.25,247.38 L635.54,253.49 L635.84,246.65 L636.13,244.69 L636.42,250.28 L636.71,245.82 L637.01,242.85 L637.30,256.26 L637.59,243.56 L637.89,246.92 L638.18,254.09 L638.47,242.47 L638.76,248.77 L639.06,244.24 L639.35,240.29 L639.64,252.44 L639.93,251.60 L640.23,257.54 L640.52,241.62 L640.81,251.65 L641.10,253.09 L641.40,253.21 L641.69,255.56 L641.98,248.09 L642.28,242.47 L642.57,251.38 L642.86,241.47 L643.15,253.63 L643.45,251.03 L643.74,244.77 L644.03,252.05 L644.32,247.94 L644.62,245.83 L644.91,235.73 L645.20,258.71 L645.50,248.85 L645.79,248.45 L646.08,246.21 L646.37,244.61 L646.67,260.10 L646.96,244.18 L647.25,263.78 L647.54,256.64 L647.84,260.71 L648.13,279.42 L648.42,271.82 L648.71,274.80 L649.01,265.63 L649.30,265.85 L649.59,272.98 L649.89,272.73 L650.18,279.17 L650.47,272.60 L650.76,291.15 L651.06,271.08 L651.35,278.64 L651.64,284.36 L651.93,275.11 L652.23,291.80 L652.52,290.52 L652.81,287.65 L653.11,290.97 L653.40,293.93 L653.69,293.57 L653.98,292.03 L654.28,311.26 L654.57,292.36 L654.86,292.15 L655.15,312.54 L655.45,303.09 L655.74,309.95 L656.03,291.44 L656.32,299.79 L656.62,305.27 L656.91,294.83 L657.20,311.01 L657.50,306.23 L657.79,294.45 L658.08,305.07 L658.37,306.81 L658.67,289.23 L658.96,308.51 L659.25,302.26 L659.54,302.05 L659.84,300.95 L660.13,312.43 L660.42,297.85 L660.72,294.44 L661.01,298.52 L661.30,301.19 L661.59,317.79 L661.89,301.22 L662.18,304.25 L662.47,301.76 L662.76,310.99 L663.06,301.90 L663.35,308.07 L663.64,304.59 L663.93,299.16 L664.23,310.45 L664.52,307.31 L664.81,306.98 L665.11,304.18 L665.40,307.35 L665.69,305.68 L665.98,313.22 L666.28,302.81 L666.57,306.02 L666.86,304.77 L667.15,302.12 L667.45,302.25 L667.74,307.39 L668.03,305.20 L668.33,311.84 L668.62,302.37 L668.91,315.06 L669.20,294.22 L669.50,300.49 L669.79,305.86 L670.08,297.16 L670.37,324.13 L670.67,302.33 L670.96,316.75 L671.25,315.09 L671.54,306.15 L671.84,299.13 L672.13,300.89 L672.42,303.49 L672.72,297.18 L673.01,309.71 L673.30,294.27 L673.59,304.68 L673.89,302.52 L674.18,300.01 L674.47,311.17 L674.76,299.48 L675.06,303.22 L675.35,303.65 L675.64,309.34 L675.94,316.13 L676.23,307.93 L676.52,305.27 L676.81,303.60 L677.11,312.83 L677.40,295.66 L677.69,300.54 L677.98,301.02 L678.28,307.88 L678.57,300.65 L678.86,314.38 L679.15,298.36 L679.45,301.64 L679.74,298.26 L680.03,303.85 L680.33,316.74 L680.62,303.52 L680.91,304.02 L681.20,304.89 L681.50,308.31 L681.79,300.66 L682.08,288.91 L682.37,294.81 L682.67,309.29 L682.96,301.47 L683.25,301.04 L683.55,312.41 L683.84,308.21 L684.13,295.99 L684.42,312.44 L684.72,307.38 L685.01,291.04 L685.30,298.84 L685.59,301.16 L685.89,293.58 L686.18,299.65 L686.47,302.00 L686.76,312.00 L687.06,308.35 L687.35,294.40 L687.64,295.15 L687.94,300.88 L688.23,298.25 L688.52,293.28 L688.81,297.80 L689.11,298.21 L689.40,291.71 L689.69,296.21 L689.98,296.40 L690.28,295.13 L690.57,292.69 L690.86,301.46 L691.16,300.93 L691.45,306.74 L691.74,314.69 L692.03,313.80 L692.33,298.54 L692.62,296.87 L692.91,296.40 L693.20,308.62 L693.50,306.95 L693.79,308.18 L694.08,303.27 L694.37,300.91 L694.67,305.21 L694.96,300.69 L695.25,292.71 L695.55,307.70 L695.84,311.54 L696.13,299.34 L696.42,306.32 L696.72,295.72 L697.01,297.17 L697.30,294.73 L697.59,309.68 L697.89,300.31 L698.18,313.46 L698.47,300.59 L698.77,298.53 L699.06,310.37 L699.35,302.87 L699.64,300.59 L699.94,299.87 L700.23,321.96 L700.52,304.00 L700.81,306.22 L701.11,307.01 L701.40,299.15 L701.69,301.78 L701.98,305.76 L702.28,319.37 L702.57,309.98 L702.86,304.75 L703.16,312.66 L703.45,303.09 L703.74,316.27 L704.03,301.44 L704.33,309.35 L704.62,301.95 L704.91,312.22 L705.20,303.33 L705.50,303.39 L705.79,307.74 L706.08,313.29 L706.38,306.63 L706.67,303.81 L706.96,303.58 L707.25,308.68 L707.55,303.68 L707.84,298.90 L708.13,309.13 L708.42,300.50 L708.72,303.15 L709.01,303.09 L709.30,298.07 L709.59,298.13 L709.89,303.29 L710.18,307.79 L710.47,299.36 L710.77,311.03 L711.06,306.46 L711.35,304.69 L711.64,307.93 L711.94,310.61 L712.23,308.43 L712.52,308.30 L712.81,296.54 L713.11,305.44 L713.40,317.09" fill="none" stroke="#2626cc" stroke-width="0.62" stroke-linejoin="round"/>
<line x1="489.80" y1="190.50" x2="489.80" y2="219.00" stroke="#9a9ae8" stroke-width="0.7" />
<line x1="489.80" y1="218.00" x2="489.80" y2="252.00" stroke="#3030c8" stroke-width="0.9" />
<text x="407.00" y="124.95" font-size="5" fill="#777" font-weight="normal" textLength="2.60" lengthAdjust="spacingAndGlyphs" >▾</text>
<text x="414.30" y="124.82" font-size="5.2" fill="#555" font-weight="normal" textLength="14.70" lengthAdjust="spacingAndGlyphs" >Trace 1</text>
<rect x="436.80" y="120.60" width="4.80" height="4.80" fill="#e4f0fc" stroke="#5e9be0" stroke-width="0.7" rx="0.5" />
<text x="437.60" y="124.54" font-size="4.4" fill="#3a78c8" font-weight="normal" textLength="3.40" lengthAdjust="spacingAndGlyphs" >✓</text>
<text x="443.60" y="124.82" font-size="5.2" fill="#555" font-weight="normal" textLength="10.20" lengthAdjust="spacingAndGlyphs" >Show</text>
<text x="458.50" y="124.82" font-size="5.2" fill="#555" font-weight="normal" textLength="27.00" lengthAdjust="spacingAndGlyphs" >+Peak Normal</text>
<rect x="704.80" y="119.40" width="13.90" height="6.80" fill="url(#btn)" stroke="#b4c8d4" stroke-width="0.6" rx="0.8" />
<text x="707.20" y="124.58" font-size="4.8" fill="#333" font-weight="normal" textLength="9.20" lengthAdjust="spacingAndGlyphs" >Clear</text>
<text x="377.00" y="133.22" font-size="5.2" fill="#555" font-weight="normal" textLength="14.00" lengthAdjust="spacingAndGlyphs" >dB/div:</text>
<text x="373.00" y="138.15" font-size="5" fill="#444" font-weight="normal" textLength="2.00" lengthAdjust="spacingAndGlyphs" >•</text>
<text x="378.50" y="139.45" font-size="5" fill="#555" font-weight="normal" textLength="15.50" lengthAdjust="spacingAndGlyphs" >10.0 dB</text>
<text x="377.00" y="146.22" font-size="5.2" fill="#555" font-weight="normal" textLength="9.00" lengthAdjust="spacingAndGlyphs" >RBW:</text>
<text x="373.00" y="151.55" font-size="5" fill="#444" font-weight="normal" textLength="2.00" lengthAdjust="spacingAndGlyphs" >•</text>
<text x="378.50" y="152.75" font-size="5" fill="#555" font-weight="normal" textLength="17.50" lengthAdjust="spacingAndGlyphs" >3.00 kHz</text>
<rect x="373.70" y="156.30" width="4.80" height="4.80" fill="#fafcff" stroke="#6f9fd8" stroke-width="0.7" rx="0.5" />
<text x="380.30" y="160.62" font-size="5.2" fill="#555" font-weight="normal" textLength="10.70" lengthAdjust="spacingAndGlyphs" >VBW:</text>
<text x="405.30" y="133.15" font-size="5.3" fill="#222" font-weight="normal" textLength="11.00" lengthAdjust="spacingAndGlyphs" >-64.5</text>
<line x1="418.30" y1="129.20" x2="418.30" y2="130.80" stroke="#666" stroke-width="0.5" />
<text x="405.30" y="196.51" font-size="5.3" fill="#222" font-weight="normal" textLength="11.00" lengthAdjust="spacingAndGlyphs" >-84.5</text>
<line x1="418.30" y1="192.56" x2="418.30" y2="194.16" stroke="#666" stroke-width="0.5" />
<text x="402.60" y="259.88" font-size="5.3" fill="#222" font-weight="normal" textLength="13.70" lengthAdjust="spacingAndGlyphs" >-104.5</text>
<line x1="418.30" y1="255.92" x2="418.30" y2="257.52" stroke="#666" stroke-width="0.5" />
<text x="402.60" y="323.23" font-size="5.3" fill="#222" font-weight="normal" textLength="13.70" lengthAdjust="spacingAndGlyphs" >-124.5</text>
<line x1="418.30" y1="319.28" x2="418.30" y2="320.88" stroke="#666" stroke-width="0.5" />
<text x="402.60" y="386.59" font-size="5.3" fill="#222" font-weight="normal" textLength="13.70" lengthAdjust="spacingAndGlyphs" >-144.5</text>
<line x1="418.30" y1="382.64" x2="418.30" y2="384.24" stroke="#666" stroke-width="0.5" />
<text x="407.00" y="447.75" font-size="5.3" fill="#222" font-weight="normal" textLength="12.30" lengthAdjust="spacingAndGlyphs" >-164.5</text>
<rect x="373.50" y="448.50" width="26.50" height="7.40" fill="url(#btn)" stroke="#7fa6d8" stroke-width="0.6" rx="0.8" />
<text x="376.30" y="453.88" font-size="4.8" fill="#555" font-weight="normal" textLength="20.90" lengthAdjust="spacingAndGlyphs" >Autoscale</text>
<text x="408.00" y="453.95" font-size="5" fill="#444" font-weight="normal" textLength="2.00" lengthAdjust="spacingAndGlyphs" >•</text>
<text x="413.00" y="453.68" font-size="4.8" fill="#555" font-weight="normal" textLength="9.00" lengthAdjust="spacingAndGlyphs" >Start</text>
<text x="426.00" y="453.75" font-size="5" fill="#555" font-weight="normal" textLength="22.00" lengthAdjust="spacingAndGlyphs" >522.00 MHz</text>
<text x="650.00" y="453.95" font-size="5" fill="#444" font-weight="normal" textLength="2.00" lengthAdjust="spacingAndGlyphs" >•</text>
<text x="655.00" y="453.48" font-size="4.8" fill="#555" font-weight="normal" textLength="10.00" lengthAdjust="spacingAndGlyphs" >Stop</text>
<text x="668.40" y="453.55" font-size="5" fill="#555" font-weight="normal" textLength="23.00" lengthAdjust="spacingAndGlyphs" >532.00 MHz</text>
<rect x="425.60" y="439.60" width="1.00" height="1.00" fill="#888" rx="0" />
<rect x="20.00" y="458.80" width="703.00" height="14.20" fill="#fff" rx="0" />
<text x="14.60" y="468.38" font-size="6.8" fill="#2e2e2e" font-weight="normal" textLength="34.00" lengthAdjust="spacingAndGlyphs" clip-path="url(#cs)">Spectrogram</text>
<text x="62.00" y="468.31" font-size="6.6" fill="#2e2e2e" font-weight="normal" textLength="24.00" lengthAdjust="spacingAndGlyphs" >Frequency</text>
<rect x="89.00" y="462.30" width="49.00" height="7.40" fill="#fff" stroke="#ccd3dc" stroke-width="0.6" rx="0" />
<text x="91.00" y="468.24" font-size="6.4" fill="#2e2e2e" font-weight="normal" textLength="28.00" lengthAdjust="spacingAndGlyphs" >527.00 MHz</text>
<text x="228.30" y="468.11" font-size="6.6" fill="#2e2e2e" font-weight="normal" textLength="18.40" lengthAdjust="spacingAndGlyphs" >Ref Lev</text>
<rect x="248.80" y="462.30" width="33.80" height="7.40" fill="#fff" stroke="#ccd3dc" stroke-width="0.6" rx="0" />
<text x="250.20" y="468.24" font-size="6.4" fill="#2e2e2e" font-weight="normal" textLength="26.80" lengthAdjust="spacingAndGlyphs" >-63.00 dBm</text>
<text x="379.40" y="468.31" font-size="6.6" fill="#2e2e2e" font-weight="normal" textLength="11.60" lengthAdjust="spacingAndGlyphs" >Span</text>
<rect x="393.40" y="462.30" width="33.50" height="7.40" fill="#fff" stroke="#ccd3dc" stroke-width="0.6" rx="0" />
<text x="395.30" y="468.24" font-size="6.4" fill="#2e2e2e" font-weight="normal" textLength="25.70" lengthAdjust="spacingAndGlyphs" >10.00 MHz</text>
<text x="513.20" y="468.31" font-size="6.6" fill="#2e2e2e" font-weight="normal" textLength="18.80" lengthAdjust="spacingAndGlyphs" >Res BW</text>
<rect x="534.30" y="462.30" width="34.70" height="7.40" fill="#fff" stroke="#ccd3dc" stroke-width="0.6" rx="0" />
<text x="536.20" y="468.24" font-size="6.4" fill="#2e2e2e" font-weight="normal" textLength="21.80" lengthAdjust="spacingAndGlyphs" >3.00 kHz</text>
<rect x="666.20" y="462.00" width="22.10" height="8.60" fill="url(#btn)" stroke="#7fa6d8" stroke-width="0.7" rx="0.8" />
<text x="668.20" y="468.40" font-size="6" fill="#2e2e2e" font-weight="normal" textLength="18.10" lengthAdjust="spacingAndGlyphs" >Markers</text>
<rect x="690.00" y="462.00" width="18.90" height="8.60" fill="url(#btn)" stroke="#7fa6d8" stroke-width="0.7" rx="0.8" />
<text x="692.00" y="468.40" font-size="6" fill="#2e2e2e" font-weight="normal" textLength="15.00" lengthAdjust="spacingAndGlyphs" >Traces</text>
<rect x="710.20" y="461.80" width="10.40" height="9.00" fill="#e6f0fb" stroke="#9cc0ea" stroke-width="0.6" rx="0.8" />
<line x1="20.00" y1="472.60" x2="723.00" y2="472.60" stroke="#b5d0ea" stroke-width="0.9" />
<rect x="17.00" y="474.80" width="706.00" height="2.10" fill="#141414" rx="0" />
<rect x="22.00" y="474.80" width="2.40" height="1.60" fill="#b07030" rx="0" opacity="0.75"/>
<rect x="26.78" y="474.80" width="4.27" height="1.60" fill="#555" rx="0" opacity="0.75"/>
<rect x="50.01" y="474.80" width="4.60" height="1.60" fill="#555" rx="0" opacity="0.75"/>
<rect x="89.84" y="474.80" width="6.06" height="1.60" fill="#888" rx="0" opacity="0.75"/>
<rect x="103.94" y="474.80" width="5.68" height="1.60" fill="#c8c8c8" rx="0" opacity="0.75"/>
<rect x="128.55" y="474.80" width="2.46" height="1.60" fill="#e0a040" rx="0" opacity="0.75"/>
<rect x="147.04" y="474.80" width="4.81" height="1.60" fill="#d03030" rx="0" opacity="0.75"/>
<rect x="164.59" y="474.80" width="3.54" height="1.60" fill="#c8c8c8" rx="0" opacity="0.75"/>
<rect x="183.03" y="474.80" width="5.38" height="1.60" fill="#ddd" rx="0" opacity="0.75"/>
<rect x="193.62" y="474.80" width="2.98" height="1.60" fill="#c8c8c8" rx="0" opacity="0.75"/>
<rect x="201.97" y="474.80" width="3.02" height="1.60" fill="#b07030" rx="0" opacity="0.75"/>
<rect x="210.89" y="474.80" width="3.30" height="1.60" fill="#b07030" rx="0" opacity="0.75"/>
<rect x="216.51" y="474.80" width="4.19" height="1.60" fill="#d03030" rx="0" opacity="0.75"/>
<rect x="224.48" y="474.80" width="5.58" height="1.60" fill="#c8c8c8" rx="0" opacity="0.75"/>
<rect x="232.59" y="474.80" width="3.74" height="1.60" fill="#ddd" rx="0" opacity="0.75"/>
<rect x="17.00" y="92.00" width="3.00" height="385.00" fill="#363636" rx="0" />
<line x1="19.80" y1="97.00" x2="19.80" y2="474.00" stroke="#4a6a8a" stroke-width="0.5" />
<g transform="translate(20.3,99.2)" fill="none" stroke="#333" stroke-width="0.9" stroke-linecap="round" stroke-linejoin="round"><path d="M0.5,8 L0.5,2.3 L1.6,1 L4,1 L4.8,2.3 L7.6,2.3 L7.6,3.8 M0.5,8 L1.8,3.8 L8.6,3.8 L7.4,8 Z"/></g>
<g transform="translate(33.2,99.2)" fill="none" stroke="#333" stroke-width="0.9" stroke-linecap="round" stroke-linejoin="round"><rect x="0.5" y="0.5" width="8.4" height="8" fill="#a4a4a4" stroke="#555" stroke-width="0.8"/><rect x="2" y="0.9" width="5.4" height="3.4" fill="#e4e4e4" stroke="none"/><rect x="2.6" y="5.8" width="4.2" height="2.7" fill="#444" stroke="none"/></g>
<g transform="translate(46.2,99.2)" fill="none" stroke="#333" stroke-width="0.9" stroke-linecap="round" stroke-linejoin="round"><path d="M1.8,6.6 C1.8,2.4 6.8,1.2 9.6,5.2" stroke="#555" stroke-width="1.3"/><path d="M0.5,4.2 L1.7,7.3 L4.6,6" stroke="#555" stroke-width="1.1"/></g>
<g transform="translate(59.9,99.2)" fill="none" stroke="#333" stroke-width="0.9" stroke-linecap="round" stroke-linejoin="round"><path d="M8.4,6.6 C8.4,2.4 3.4,1.2 0.6,5.2" stroke="#bcbcbc" stroke-width="1.3"/><path d="M9.7,4.2 L8.5,7.3 L5.6,6" stroke="#bcbcbc" stroke-width="1.1"/></g>
<g transform="translate(72.8,99.2)" fill="none" stroke="#333" stroke-width="0.9" stroke-linecap="round" stroke-linejoin="round"><rect x="2.6" y="0.8" width="6.4" height="5"/><line x1="2.6" y1="2" x2="9" y2="2"/><rect x="0.5" y="3.2" width="6.4" height="5" fill="#fff"/><line x1="0.5" y1="4.4" x2="6.9" y2="4.4"/></g>
<g transform="translate(91,103.6)"><circle r="3.01" fill="none" stroke="#111" stroke-width="1.69"/><rect x="-0.94" y="-4.70" width="1.88" height="1.97" fill="#111" transform="rotate(0)"/><rect x="-0.94" y="-4.70" width="1.88" height="1.97" fill="#111" transform="rotate(45)"/><rect x="-0.94" y="-4.70" width="1.88" height="1.97" fill="#111" transform="rotate(90)"/><rect x="-0.94" y="-4.70" width="1.88" height="1.97" fill="#111" transform="rotate(135)"/><rect x="-0.94" y="-4.70" width="1.88" height="1.97" fill="#111" transform="rotate(180)"/><rect x="-0.94" y="-4.70" width="1.88" height="1.97" fill="#111" transform="rotate(225)"/><rect x="-0.94" y="-4.70" width="1.88" height="1.97" fill="#111" transform="rotate(270)"/><rect x="-0.94" y="-4.70" width="1.88" height="1.97" fill="#111" transform="rotate(315)"/></g>
<g transform="translate(99.9,99.2)" fill="none" stroke="#333" stroke-width="0.9" stroke-linecap="round" stroke-linejoin="round"><path d="M0.6,0.9 L7.2,0.9 L7.2,5.6 L3.9,8 L0.6,5.6 Z" stroke="#666" stroke-width="0.8"/><path d="M2.2,2.5 L5.6,2.5 M3.9,2.5 L3.9,5.8" stroke="#1a1a1a" stroke-width="1.5" stroke-linecap="butt"/></g>
<g transform="translate(113,99.2)" fill="none" stroke="#333" stroke-width="0.9" stroke-linecap="round" stroke-linejoin="round"><path d="M4.4,1.8 L2,6.6 L6.8,6.6 Z" stroke-width="1"/><path d="M0.8,2.6 C1.6,0.6 3,0.6 4.4,1.8 C5.8,0.6 7.2,0.6 8,2.6" stroke-width="0.8"/><path d="M0.6,8.3 L8.2,8.3" stroke-width="1.6" stroke="#111" stroke-linecap="butt"/></g>
<g transform="translate(126,99.2)" fill="none" stroke="#333" stroke-width="0.9" stroke-linecap="round" stroke-linejoin="round"><path d="M0.5,7.4 L2.3,2 L3.7,5.4"/><path d="M3.7,8 L6.1,1 L8.6,8"/><path d="M4.7,2.8 L6.1,0.8 L7.5,2.8" stroke-width="0.8"/><path d="M4.9,5.6 L7.4,5.6" stroke-width="0.7"/></g>
<g transform="translate(139,99.2)" fill="none" stroke="#333" stroke-width="0.9" stroke-linecap="round" stroke-linejoin="round"><path d="M0.8,0.8 L0.8,8.2 M8.6,0.8 L8.6,8.2 M0.8,0.6 L8.6,0.6" stroke="#777" stroke-width="0.6"/><path d="M1.6,6.8 L3.2,2 L5,7 L6.6,2.2 L7.8,4"/><path d="M1.4,8.6 L8,8.6" stroke="#888" stroke-width="0.6"/></g>
<g transform="translate(152.6,99.2)" fill="none" stroke="#333" stroke-width="0.9" stroke-linecap="round" stroke-linejoin="round"><circle cx="4.3" cy="1.7" r="1.1"/><path d="M4.3,2.9 L4.9,5.4"/><ellipse cx="4.6" cy="6.3" rx="4.1" ry="2.1"/><path d="M2.6,6.2 C3.6,7.2 6,7.2 7,5.8" stroke-width="0.7"/></g>
<g transform="translate(165.5,99.2)" fill="none" stroke="#333" stroke-width="0.9" stroke-linecap="round" stroke-linejoin="round"><path d="M0.6,3.4 L2.6,3.4 L5,1 L5,8 L2.6,5.8 L0.6,5.8 Z"/><path d="M6.4,2.6 C7.4,3.8 7.4,5.4 6.4,6.6 M7.8,1.4 C9.4,3.4 9.4,5.8 7.8,7.8" stroke-width="0.7"/></g>
<g transform="translate(179.4,99.2)" fill="none" stroke="#333" stroke-width="0.9" stroke-linecap="round" stroke-linejoin="round"><rect x="0.5" y="1.4" width="6.6" height="7" stroke="#666" stroke-width="0.7"/><path d="M2.6,7 L2.6,3 L4.4,3 C5.6,3 5.6,5 4.4,5 L2.6,5" stroke="#111" stroke-width="1.1"/><circle cx="7.2" cy="1.2" r="0.7" fill="#111" stroke="none"/></g>
<rect x="627.20" y="100.20" width="16.30" height="6.60" fill="#4a93e4" rx="3.3" />
<text x="629.80" y="105.18" font-size="4.8" fill="#14305c" font-weight="normal" textLength="11.20" lengthAdjust="spacingAndGlyphs" >Preset</text>
<path d="M649,101.8 L651,103.6 L649,105.4 Z M651.2,101.8 L653.2,103.6 L651.2,105.4 Z" fill="#2f86e0"/>
<text x="655.00" y="105.60" font-size="6" fill="#444" font-weight="normal" textLength="15.80" lengthAdjust="spacingAndGlyphs" >Replay</text>
<path d="M674.2,102.7 L677.8,102.7 L676,104.9 Z" fill="#333"/>
<path d="M688.2,103.6 A2.2,2.2 0 1 1 686.6,101.5" fill="none" stroke="#2db84a" stroke-width="0.9"/><path d="M686,100.4 L687.6,101.6 L686,102.8 Z" fill="#2db84a"/>
<text x="689.40" y="105.60" font-size="6" fill="#444" font-weight="normal" textLength="10.60" lengthAdjust="spacingAndGlyphs" >Stop</text>
<path d="M703.2,102.7 L706.8,102.7 L705,104.9 Z" fill="#333"/>
<rect x="715.90" y="100.00" width="1.20" height="1.20" fill="#444" rx="0" />
<rect x="715.90" y="102.80" width="1.20" height="1.20" fill="#444" rx="0" />
<rect x="715.90" y="105.60" width="1.20" height="1.20" fill="#444" rx="0" />
<g transform="translate(715.4,466.3)"><circle r="2.50" fill="none" stroke="#111" stroke-width="1.40"/><rect x="-0.78" y="-3.90" width="1.56" height="1.64" fill="#111" transform="rotate(0)"/><rect x="-0.78" y="-3.90" width="1.56" height="1.64" fill="#111" transform="rotate(45)"/><rect x="-0.78" y="-3.90" width="1.56" height="1.64" fill="#111" transform="rotate(90)"/><rect x="-0.78" y="-3.90" width="1.56" height="1.64" fill="#111" transform="rotate(135)"/><rect x="-0.78" y="-3.90" width="1.56" height="1.64" fill="#111" transform="rotate(180)"/><rect x="-0.78" y="-3.90" width="1.56" height="1.64" fill="#111" transform="rotate(225)"/><rect x="-0.78" y="-3.90" width="1.56" height="1.64" fill="#111" transform="rotate(270)"/><rect x="-0.78" y="-3.90" width="1.56" height="1.64" fill="#111" transform="rotate(315)"/></g>
</svg>
</body></html>
